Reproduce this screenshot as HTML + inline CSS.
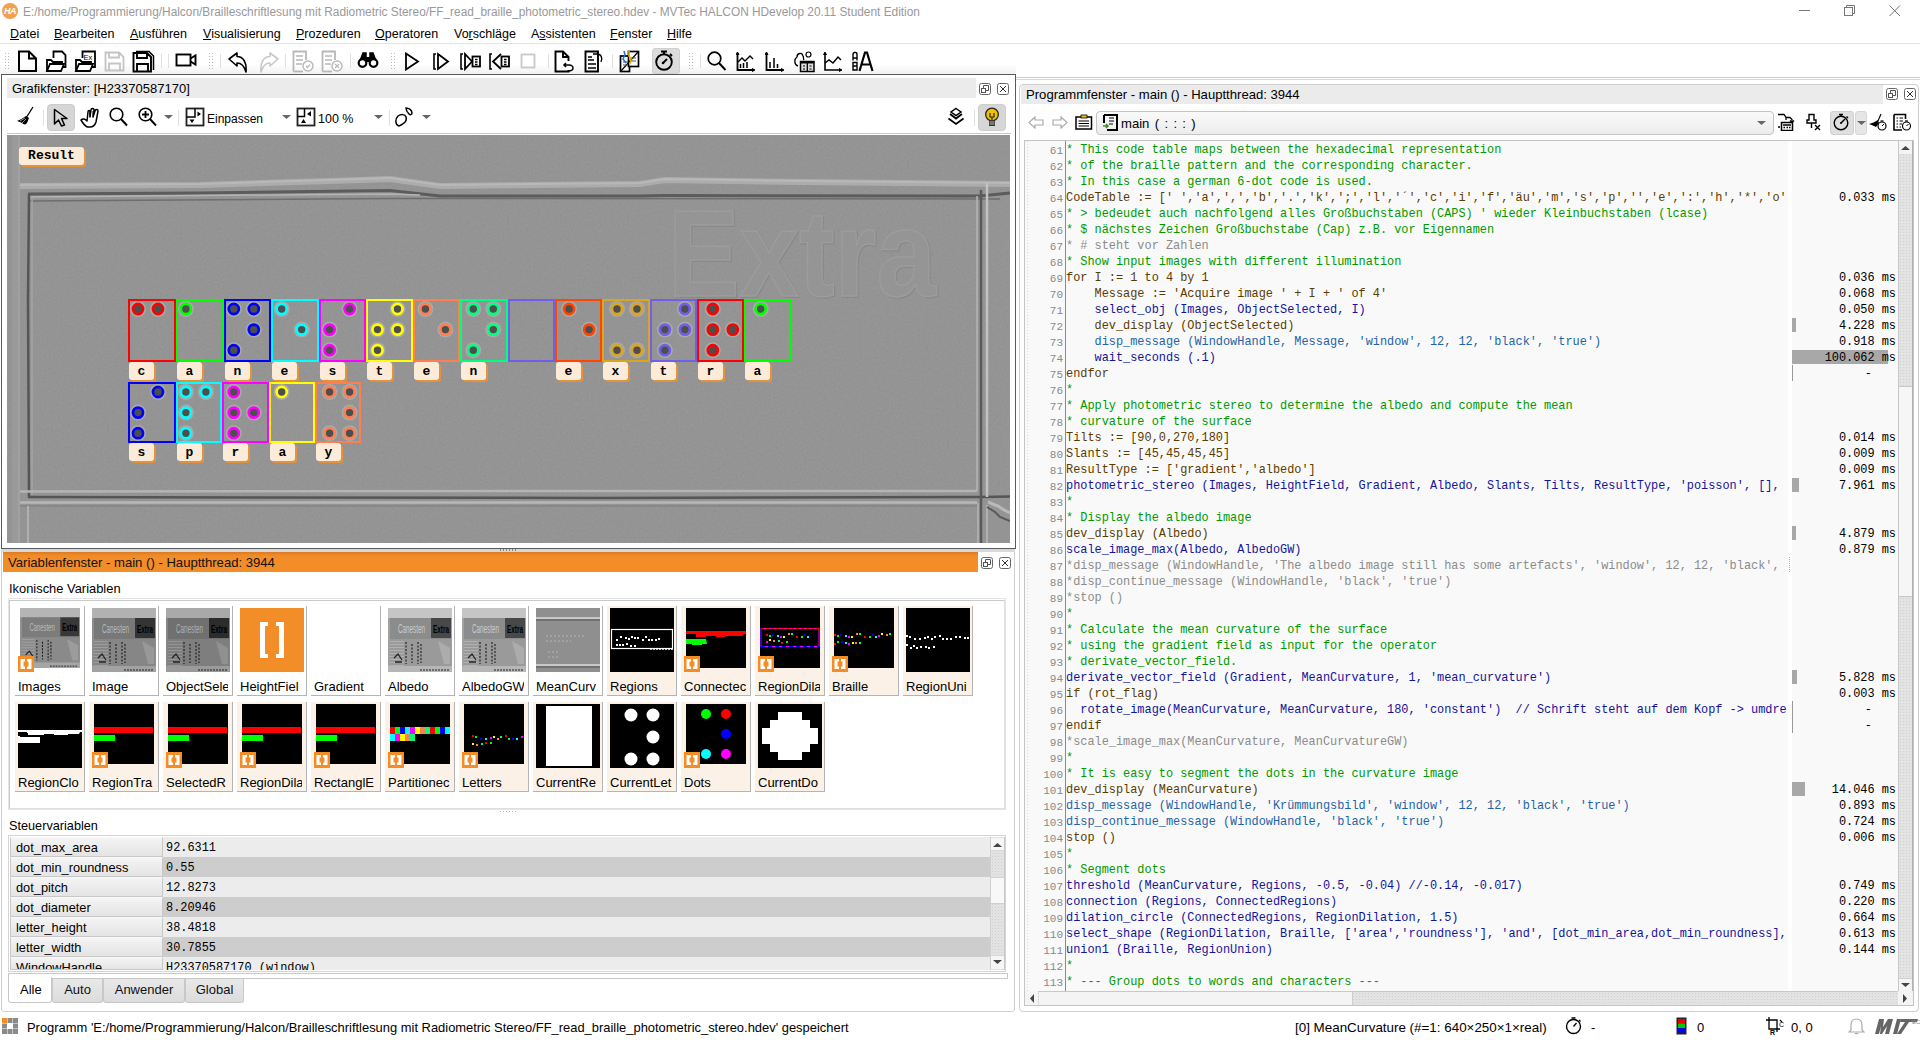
<!DOCTYPE html><html><head><meta charset="utf-8"><style>
*{margin:0;padding:0;box-sizing:border-box}
html,body{width:1920px;height:1040px;overflow:hidden;background:#fff;font-family:"Liberation Sans",sans-serif;color:#000}
div{position:absolute}
.t{white-space:nowrap;font-size:13px;line-height:15px}
.m{font-family:"Liberation Mono",monospace}
u{text-decoration:none;border-bottom:1px solid currentColor;line-height:11px;display:inline-block}
</style></head><body><div style="left:2px;top:3px;width:16px;height:16px;border-radius:50%;background:#f0a050"></div><div class="t" style="left:4px;top:7px;font-size:9px;line-height:9px;color:#fff;letter-spacing:-0.5px"><i style="font-style:italic;font-weight:bold">HA</i></div><div class="t" style="left:23px;top:5px;font-size:11.87px;line-height:14px;color:#999">E:/home/Programmierung/Halcon/Brailleschriftlesung mit Radiometric Stereo/FF_read_braille_photometric_stereo.hdev - MVTec HALCON HDevelop 20.11 Student Edition</div><div style="left:1799px;top:10px;width:11px;height:1px;background:#777"></div><svg style="position:absolute;left:1844px;top:5px;" width="11" height="11" viewBox="0 0 11 11" fill="none" stroke="#000" stroke-width="1.3"><rect x="0.5" y="2.5" width="8" height="8" stroke="#777" stroke-width="1"/><path d="M2.5 2.5V0.5H10.5V8.5H8.5" stroke="#777" stroke-width="1"/></svg><svg style="position:absolute;left:1889px;top:5px;" width="12" height="12" viewBox="0 0 12 12" fill="none" stroke="#000" stroke-width="1.3"><path d="M0.5 0.5L11 11M11 0.5L0.5 11" stroke="#777" stroke-width="1"/></svg><div class="t" style="left:10px;top:27px;font-size:12.5px;color:#000"><span style="text-decoration:underline;text-underline-offset:1px">D</span>atei</div><div class="t" style="left:54px;top:27px;font-size:12.5px;color:#000"><span style="text-decoration:underline;text-underline-offset:1px">B</span>earbeiten</div><div class="t" style="left:130px;top:27px;font-size:12.5px;color:#000"><span style="text-decoration:underline;text-underline-offset:1px">A</span>usführen</div><div class="t" style="left:203px;top:27px;font-size:12.5px;color:#000"><span style="text-decoration:underline;text-underline-offset:1px">V</span>isualisierung</div><div class="t" style="left:296px;top:27px;font-size:12.5px;color:#000"><span style="text-decoration:underline;text-underline-offset:1px">P</span>rozeduren</div><div class="t" style="left:375px;top:27px;font-size:12.5px;color:#000"><span style="text-decoration:underline;text-underline-offset:1px">O</span>peratoren</div><div class="t" style="left:454px;top:27px;font-size:12.5px;color:#000">Vo<span style="text-decoration:underline;text-underline-offset:1px">r</span>schläge</div><div class="t" style="left:531px;top:27px;font-size:12.5px;color:#000">A<span style="text-decoration:underline;text-underline-offset:1px">s</span>sistenten</div><div class="t" style="left:610px;top:27px;font-size:12.5px;color:#000"><span style="text-decoration:underline;text-underline-offset:1px">F</span>enster</div><div class="t" style="left:667px;top:27px;font-size:12.5px;color:#000"><span style="text-decoration:underline;text-underline-offset:1px">H</span>ilfe</div><div style="left:0px;top:43px;width:1920px;height:1px;background:#e3e3e3"></div><div style="left:0px;top:44px;width:1016px;height:31px;background:linear-gradient(#fff 0,#fff 65%,#f0f0f0 100%)"></div><svg style="position:absolute;left:5px;top:53px;" width="5" height="18" viewBox="0 0 5 18" fill="none" stroke="#000" stroke-width="1.3"><rect x="0" y="0" width="1" height="1" fill="#bbb" stroke="none"/><rect x="3" y="0" width="1" height="1" fill="#bbb" stroke="none"/><rect x="0" y="3" width="1" height="1" fill="#bbb" stroke="none"/><rect x="3" y="3" width="1" height="1" fill="#bbb" stroke="none"/><rect x="0" y="6" width="1" height="1" fill="#bbb" stroke="none"/><rect x="3" y="6" width="1" height="1" fill="#bbb" stroke="none"/><rect x="0" y="9" width="1" height="1" fill="#bbb" stroke="none"/><rect x="3" y="9" width="1" height="1" fill="#bbb" stroke="none"/><rect x="0" y="12" width="1" height="1" fill="#bbb" stroke="none"/><rect x="3" y="12" width="1" height="1" fill="#bbb" stroke="none"/><rect x="0" y="15" width="1" height="1" fill="#bbb" stroke="none"/><rect x="3" y="15" width="1" height="1" fill="#bbb" stroke="none"/></svg><svg style="position:absolute;left:17px;top:50px;" width="21" height="23" viewBox="0 0 21 23" fill="none" stroke="#000" stroke-width="1.3"><path d="M2 1.5H12L19 8.5V21H2Z M12 1.5V8.5H19" stroke-width="2"/></svg><svg style="position:absolute;left:45px;top:50px;" width="23" height="23" viewBox="0 0 23 23" fill="none" stroke="#000" stroke-width="1.3"><path d="M8.5 8V1.5H17L20.5 5V17H18" stroke-width="1.8"/><path d="M2 21V10H6L8 12H17V16" stroke-width="1.8"/><path d="M2 21L5 14H19L16 21Z" stroke-width="1.8" fill="#fff"/></svg><svg style="position:absolute;left:74px;top:50px;" width="23" height="23" viewBox="0 0 23 23" fill="none" stroke="#000" stroke-width="1.3"><path d="M8.5 8V1.5H21V17H18" stroke-width="1.8"/><path d="M2 21V10H6L8 12H17V16" stroke-width="1.8"/><path d="M2 21L5 14H19L16 21Z" stroke-width="1.8" fill="#fff"/><text x="9.5" y="10" font-size="7.5" font-family="Liberation Sans" fill="#000" stroke="none">Ex</text></svg><svg style="position:absolute;left:104px;top:51px;" width="21" height="21" viewBox="0 0 21 21" fill="none" stroke="#000" stroke-width="1.3"><path d="M1.5 1.5H15L19.5 6V19.5H1.5Z M5 1.5V6.5H15V1.5 M5 19.5V12.5H16V19.5" stroke="#c4c4c4" stroke-width="1.8"/></svg><svg style="position:absolute;left:132px;top:50px;" width="23" height="23" viewBox="0 0 23 23" fill="none" stroke="#000" stroke-width="1.3"><path d="M1.5 3H15L19 7V21.5H1.5Z M5 3V8H15V3 M5 21.5V14H16V21.5" stroke-width="1.9"/><path d="M4 1.5H17L21.5 6V20" stroke-width="1.5"/></svg><div style="left:161px;top:54px;width:1px;height:14px;background:#e0e0e0"></div><div style="left:168px;top:54px;width:1px;height:14px;background:#e0e0e0"></div><svg style="position:absolute;left:175px;top:53px;" width="23" height="17" viewBox="0 0 23 17" fill="none" stroke="#000" stroke-width="1.3"><rect x="1.5" y="1.5" width="14" height="11" stroke-width="1.9"/><path d="M15.5 5.5L20.5 2.5V11.5L15.5 8.5" stroke-width="1.9"/></svg><svg style="position:absolute;left:209px;top:53px;" width="5" height="18" viewBox="0 0 5 18" fill="none" stroke="#000" stroke-width="1.3"><rect x="0" y="0" width="1" height="1" fill="#bbb" stroke="none"/><rect x="3" y="0" width="1" height="1" fill="#bbb" stroke="none"/><rect x="0" y="3" width="1" height="1" fill="#bbb" stroke="none"/><rect x="3" y="3" width="1" height="1" fill="#bbb" stroke="none"/><rect x="0" y="6" width="1" height="1" fill="#bbb" stroke="none"/><rect x="3" y="6" width="1" height="1" fill="#bbb" stroke="none"/><rect x="0" y="9" width="1" height="1" fill="#bbb" stroke="none"/><rect x="3" y="9" width="1" height="1" fill="#bbb" stroke="none"/><rect x="0" y="12" width="1" height="1" fill="#bbb" stroke="none"/><rect x="3" y="12" width="1" height="1" fill="#bbb" stroke="none"/><rect x="0" y="15" width="1" height="1" fill="#bbb" stroke="none"/><rect x="3" y="15" width="1" height="1" fill="#bbb" stroke="none"/></svg><div style="left:220px;top:54px;width:1px;height:14px;background:#e0e0e0"></div><svg style="position:absolute;left:228px;top:52px;" width="22" height="22" viewBox="0 0 22 22" fill="none" stroke="#000" stroke-width="1.3"><path d="M1 7L9 1V4.5C15 4.5 19 10 18 20C16 13 13 11 9 11V14Z" stroke-width="1.6" stroke-linejoin="round"/></svg><svg style="position:absolute;left:257px;top:52px;" width="22" height="22" viewBox="0 0 22 22" fill="none" stroke="#000" stroke-width="1.3"><path d="M21 7L13 1V4.5C7 4.5 3 10 4 20C6 13 9 11 13 11V14Z" stroke="#c8c8c8" stroke-width="1.6" stroke-linejoin="round"/></svg><div style="left:285px;top:54px;width:1px;height:14px;background:#e0e0e0"></div><svg style="position:absolute;left:292px;top:50px;" width="22" height="23" viewBox="0 0 22 23" fill="none" stroke="#000" stroke-width="1.3"><path d="M1.5 21.5V1.5H14V10" stroke="#b8b8b8" stroke-width="1.8"/><path d="M1.5 21.5H11" stroke="#b8b8b8" stroke-width="1.8"/><path d="M4 6H11M4 10H11M4 14H10" stroke="#b8b8b8" stroke-width="1.5"/><circle cx="16" cy="16" r="5" fill="#fff" stroke="#b8b8b8" stroke-width="1.4"/><path d="M14 16L15.5 17.5L18 14.5" stroke="#bbb" stroke-width="1.3"/></svg><svg style="position:absolute;left:321px;top:50px;" width="22" height="23" viewBox="0 0 22 23" fill="none" stroke="#000" stroke-width="1.3"><path d="M1.5 21.5V1.5H14V10" stroke="#b8b8b8" stroke-width="1.8"/><path d="M1.5 21.5H11" stroke="#b8b8b8" stroke-width="1.8"/><path d="M4 6H11M4 10H11M4 14H10" stroke="#b8b8b8" stroke-width="1.5"/><circle cx="16" cy="16" r="5" fill="#fff" stroke="#b8b8b8" stroke-width="1.4"/><path d="M14 14L18 18M18 14L14 18" stroke="#bbb" stroke-width="1.3"/></svg><div style="left:350px;top:54px;width:1px;height:14px;background:#e0e0e0"></div><svg style="position:absolute;left:357px;top:52px;" width="22" height="16" viewBox="0 0 22 16" fill="none" stroke="#000" stroke-width="1.3"><path d="M3 9L6 1H9V6H13V1H16L19 9" fill="#000" stroke-width="1.5"/><circle cx="5.5" cy="11" r="3.8" fill="#fff" stroke-width="2.2"/><circle cx="16.5" cy="11" r="3.8" fill="#fff" stroke-width="2.2"/><rect x="9" y="5" width="4" height="5" fill="#000" stroke="none"/></svg><svg style="position:absolute;left:391px;top:53px;" width="5" height="18" viewBox="0 0 5 18" fill="none" stroke="#000" stroke-width="1.3"><rect x="0" y="0" width="1" height="1" fill="#bbb" stroke="none"/><rect x="3" y="0" width="1" height="1" fill="#bbb" stroke="none"/><rect x="0" y="3" width="1" height="1" fill="#bbb" stroke="none"/><rect x="3" y="3" width="1" height="1" fill="#bbb" stroke="none"/><rect x="0" y="6" width="1" height="1" fill="#bbb" stroke="none"/><rect x="3" y="6" width="1" height="1" fill="#bbb" stroke="none"/><rect x="0" y="9" width="1" height="1" fill="#bbb" stroke="none"/><rect x="3" y="9" width="1" height="1" fill="#bbb" stroke="none"/><rect x="0" y="12" width="1" height="1" fill="#bbb" stroke="none"/><rect x="3" y="12" width="1" height="1" fill="#bbb" stroke="none"/><rect x="0" y="15" width="1" height="1" fill="#bbb" stroke="none"/><rect x="3" y="15" width="1" height="1" fill="#bbb" stroke="none"/></svg><svg style="position:absolute;left:405px;top:52px;" width="15" height="19" viewBox="0 0 15 19" fill="none" stroke="#000" stroke-width="1.3"><path d="M1 1.5L13 9.5L1 17.5Z" stroke-width="1.8" stroke-linejoin="miter"/></svg><svg style="position:absolute;left:433px;top:52px;" width="17" height="19" viewBox="0 0 17 19" fill="none" stroke="#000" stroke-width="1.3"><path d="M3 2H1V17H3" stroke-width="1.6"/><path d="M5 2L15 9.5L5 17Z" stroke-width="1.8"/></svg><svg style="position:absolute;left:460px;top:52px;" width="22" height="19" viewBox="0 0 22 19" fill="none" stroke="#000" stroke-width="1.3"><path d="M3 2H1V17H3" stroke-width="1.6"/><path d="M5 2L12 9.5L5 17Z" stroke-width="1.8"/><rect x="12.5" y="4.5" width="7.5" height="10" stroke-width="1.8"/><path d="M15 7.5H17.5M15 10H17.5M15 12.5H17.5" stroke-width="1.3"/></svg><svg style="position:absolute;left:489px;top:52px;" width="22" height="19" viewBox="0 0 22 19" fill="none" stroke="#000" stroke-width="1.3"><path d="M3 2H1V17H3" stroke-width="1.6"/><path d="M12 2L4 9.5L12 17" stroke-width="1.8"/><rect x="12.5" y="4.5" width="7.5" height="10" stroke-width="1.8"/><path d="M15 7.5H17.5M15 10H17.5M15 12.5H17.5" stroke-width="1.3"/></svg><svg style="position:absolute;left:520px;top:53px;" width="17" height="17" viewBox="0 0 17 17" fill="none" stroke="#000" stroke-width="1.3"><rect x="1.5" y="1.5" width="13" height="13" stroke="#c8c8c8" stroke-width="1.8"/></svg><div style="left:548px;top:54px;width:1px;height:14px;background:#e0e0e0"></div><svg style="position:absolute;left:554px;top:50px;" width="22" height="23" viewBox="0 0 22 23" fill="none" stroke="#000" stroke-width="1.3"><path d="M14.5 11V7L9 1.5H1.5V21.5H14.5V20 M9 1.5V7H14.5" stroke-width="1.9"/><path d="M12 13L10 15L12 17 M10 15H15C18 15 19 17 19 18C19 20 17 21 14 21" stroke-width="1.5"/></svg><svg style="position:absolute;left:584px;top:50px;" width="21" height="23" viewBox="0 0 21 23" fill="none" stroke="#000" stroke-width="1.3"><path d="M1.5 1.5H14V21.5H1.5Z" stroke-width="1.9"/><path d="M4 7H8M4 10H10M4 14H12M4 18H12" stroke-width="1.4"/><path d="M9 4H13C17 4 19 8 17 12" stroke-width="1.4"/></svg><div style="left:612px;top:54px;width:1px;height:14px;background:#e0e0e0"></div><svg style="position:absolute;left:619px;top:50px;" width="22" height="23" viewBox="0 0 22 23" fill="none" stroke="#000" stroke-width="1.3"><rect x="1.5" y="6" width="9" height="15.5" stroke-width="1.7" fill="#fff"/><rect x="9.5" y="1.5" width="10" height="15" stroke-width="1.7" fill="#fff"/><path d="M2 21L19 2" stroke-width="1.2"/><path d="M4 12H9M4 15H9M12 8H17M12 11H17" stroke-width="1.1" stroke="#555"/><path d="M5 1L6 5L4 9L7 13" stroke="#1a6fe0" stroke-width="1.5"/><path d="M10 1L10 6L12 9L11 14" stroke="#f0b000" stroke-width="1.5"/></svg><div style="left:652px;top:48px;width:28px;height:26px;background:#dcdcdc;border:1px solid #cfcfcf;border-radius:3px"></div><svg style="position:absolute;left:655px;top:50px;" width="20" height="21" viewBox="0 0 20 21" fill="none" stroke="#000" stroke-width="1.3"><circle cx="9" cy="12" r="7.8" stroke-width="1.9"/><path d="M6 1.5H12 M9 1.5V4" stroke-width="2"/><path d="M15 4L17 6" stroke-width="1.8"/><path d="M8 13L12 9" stroke-width="1.8"/><circle cx="8" cy="13" r="1.3" fill="#000" stroke="none"/></svg><svg style="position:absolute;left:689px;top:53px;" width="5" height="18" viewBox="0 0 5 18" fill="none" stroke="#000" stroke-width="1.3"><rect x="0" y="0" width="1" height="1" fill="#bbb" stroke="none"/><rect x="3" y="0" width="1" height="1" fill="#bbb" stroke="none"/><rect x="0" y="3" width="1" height="1" fill="#bbb" stroke="none"/><rect x="3" y="3" width="1" height="1" fill="#bbb" stroke="none"/><rect x="0" y="6" width="1" height="1" fill="#bbb" stroke="none"/><rect x="3" y="6" width="1" height="1" fill="#bbb" stroke="none"/><rect x="0" y="9" width="1" height="1" fill="#bbb" stroke="none"/><rect x="3" y="9" width="1" height="1" fill="#bbb" stroke="none"/><rect x="0" y="12" width="1" height="1" fill="#bbb" stroke="none"/><rect x="3" y="12" width="1" height="1" fill="#bbb" stroke="none"/><rect x="0" y="15" width="1" height="1" fill="#bbb" stroke="none"/><rect x="3" y="15" width="1" height="1" fill="#bbb" stroke="none"/></svg><div style="left:700px;top:54px;width:1px;height:14px;background:#e0e0e0"></div><svg style="position:absolute;left:707px;top:51px;" width="20" height="21" viewBox="0 0 20 21" fill="none" stroke="#000" stroke-width="1.3"><circle cx="7.5" cy="7.5" r="6.3" stroke-width="1.7"/><path d="M12 12L18.5 19" stroke-width="1.9"/></svg><svg style="position:absolute;left:736px;top:51px;" width="20" height="21" viewBox="0 0 20 21" fill="none" stroke="#000" stroke-width="1.3"><path d="M1.5 2V19H18" stroke-width="1.8"/><path d="M0 4L1.5 1L3 4M16 17.5L19 19L16 20.5" fill="#000" stroke-width="1"/><path d="M2 11L6 7L9 10L14 5L17 8" stroke-width="1.4"/><path d="M4.5 17V13M7.5 17V12M11 17V11" stroke-width="1.5"/></svg><svg style="position:absolute;left:765px;top:51px;" width="20" height="21" viewBox="0 0 20 21" fill="none" stroke="#000" stroke-width="1.3"><path d="M1.5 2V19H18" stroke-width="1.8"/><path d="M0 4L1.5 1L3 4M16 17.5L19 19L16 20.5" fill="#000" stroke-width="1"/><path d="M5 17V11M9 17V7M12.5 17V13" stroke-width="1.5"/></svg><svg style="position:absolute;left:794px;top:51px;" width="23" height="22" viewBox="0 0 23 22" fill="none" stroke="#000" stroke-width="1.3"><path d="M4 15C0 14 0 8 3 6C3 2 8 1 9 5C10 6 9 8 10 9" stroke-width="1.3"/><circle cx="14.5" cy="3.5" r="2.5" stroke-width="1.2"/><rect x="6.5" y="10.5" width="13.5" height="10" stroke-width="1.5" fill="#ddd"/><rect x="7" y="10" width="13" height="2.5" fill="#000" stroke="none"/><path d="M13.3 12V20" stroke-width="1.3"/><path d="M9 15H11M9 18H11M15.5 15H17.5M15.5 18H17.5" stroke-width="1.2"/></svg><svg style="position:absolute;left:823px;top:51px;" width="20" height="22" viewBox="0 0 20 22" fill="none" stroke="#000" stroke-width="1.3"><path d="M2 2V19H18" stroke-width="1.6"/><path d="M0.5 4L2 1L3.5 4M16 17.5L19 19L16 20.5" fill="#000" stroke-width="1"/><path d="M2 12L6 9L10 12L15 6L18 9" stroke-width="1.5"/></svg><svg style="position:absolute;left:851px;top:51px;" width="23" height="22" viewBox="0 0 23 22" fill="none" stroke="#000" stroke-width="1.3"><path d="M3 1.5H4.5C5 1.5 6 2 6 3.5V7H2V3.5C2 2 3 1.5 3.5 1.5Z M2 7V9.5 M6 7V9.5 M2 11.5H6V19H2Z M2 15H6" stroke-width="1.4"/><path d="M8.5 20L14 1.5H16L21.5 20 M10.5 13.5H19" stroke-width="2.2"/></svg><div style="left:1px;top:74px;width:1015px;height:475px;background:#fff;border:1px solid #5a5a5a"></div><div style="left:7px;top:78px;width:969px;height:20px;background:#ebebeb"></div><div class="t" style="left:12px;top:81px;font-size:13px;color:#000">Grafikfenster: [H23370587170]</div><svg style="position:absolute;left:979px;top:83px;" width="12" height="12" viewBox="0 0 12 12" fill="none" stroke="#000" stroke-width="1.3"><rect x="0.5" y="0.5" width="11" height="11" rx="2" stroke="#666" stroke-width="1"/><rect x="2.5" y="5.5" width="4" height="4" stroke="#555" stroke-width="1"/><path d="M4.5 5.5V2.5H9.5V7.5H6.5" stroke="#555" stroke-width="1"/></svg><svg style="position:absolute;left:997px;top:83px;" width="12" height="12" viewBox="0 0 12 12" fill="none" stroke="#000" stroke-width="1.3"><rect x="0.5" y="0.5" width="11" height="11" rx="2" stroke="#666" stroke-width="1"/><path d="M3 3L9 9M9 3L3 9" stroke="#333" stroke-width="1"/></svg><svg style="position:absolute;left:16px;top:106px;" width="19" height="20" viewBox="0 0 19 20" fill="none" stroke="#000" stroke-width="1.3"><path d="M17 1L10 12" stroke-width="1.3"/><path d="M10 10C7 12 4 14 1 15C3 16 5 16 6 17C7 18 9 19 10 18C12 16 12 14 13 12Z" fill="#000" stroke="none"/><path d="M4 15L9 12M6 17L10 13" stroke="#fff" stroke-width="0.6"/></svg><div style="left:43px;top:110px;width:1px;height:16px;background:#e0e0e0"></div><div style="left:47px;top:104px;width:28px;height:27px;background:#d6d6d6;border:1px solid #cdcdcd;border-radius:4px"></div><svg style="position:absolute;left:53px;top:108px;" width="16" height="19" viewBox="0 0 16 19" fill="none" stroke="#000" stroke-width="1.3"><path d="M1.5 1.5L14 10.5H8.5L11.5 17L8.5 18L5.5 12L1.5 16Z" stroke-width="1.5" stroke-linejoin="round"/></svg><svg style="position:absolute;left:80px;top:107px;" width="21" height="21" viewBox="0 0 21 21" fill="none" stroke="#000" stroke-width="1.3"><path d="M1 13C3 11 5 12 7 14L8 5C8 3 10 3 10 5V10L11 3C11 1 14 1 14 3L13 10L15 4C15 2 18 2 18 4L16 15C15 18 13 20 10 20H8C6 20 4 18 1 13Z" stroke-width="1.5" stroke-linejoin="round"/><path d="M10 10V5M13 10V4" stroke-width="1"/></svg><svg style="position:absolute;left:109px;top:107px;" width="20" height="20" viewBox="0 0 20 20" fill="none" stroke="#000" stroke-width="1.3"><circle cx="7.5" cy="7.5" r="6.3" stroke-width="1.6"/><path d="M12 12L18 18.5" stroke-width="1.9"/></svg><svg style="position:absolute;left:138px;top:107px;" width="20" height="20" viewBox="0 0 20 20" fill="none" stroke="#000" stroke-width="1.3"><circle cx="7.5" cy="7.5" r="6.3" stroke-width="1.6"/><path d="M12 12L18 18.5" stroke-width="1.9"/><path d="M4 7.5H11M7.5 4V11" stroke-width="1.8"/></svg><svg style="position:absolute;left:164px;top:115px;" width="9" height="5" viewBox="0 0 9 5" fill="none" stroke="#000" stroke-width="1.3"><path d="M0 0H9L4.5 4Z" fill="#666" stroke="none"/></svg><div style="left:178px;top:110px;width:1px;height:16px;background:#e0e0e0"></div><svg style="position:absolute;left:185px;top:107px;" width="20" height="20" viewBox="0 0 20 20" fill="none" stroke="#000" stroke-width="1.3"><rect x="1.5" y="1.5" width="17" height="17" stroke-width="1.8" stroke="#222"/><path d="M1.5 10H10V1.5" stroke-width="1.5"/><path d="M12.5 4.5L16 7L12.5 9.5Z M4.5 12.5H9.5L7 16Z" fill="#000" stroke="none"/></svg><div class="t" style="left:207px;top:112px;font-size:12px;color:#000">Einpassen</div><svg style="position:absolute;left:282px;top:115px;" width="9" height="5" viewBox="0 0 9 5" fill="none" stroke="#000" stroke-width="1.3"><path d="M0 0H9L4.5 4Z" fill="#666" stroke="none"/></svg><svg style="position:absolute;left:296px;top:107px;" width="20" height="20" viewBox="0 0 20 20" fill="none" stroke="#000" stroke-width="1.3"><rect x="1.5" y="1.5" width="17" height="17" stroke-width="1.8" stroke="#222"/><path d="M1.5 9.5H8.5V1.5" stroke-width="1.5"/><path d="M15 4L11 7L15 9.5Z M5 16H10L7.5 12Z" fill="#000" stroke="none"/></svg><div class="t" style="left:318px;top:112px;font-size:12.5px;color:#000">100 %</div><svg style="position:absolute;left:374px;top:115px;" width="9" height="5" viewBox="0 0 9 5" fill="none" stroke="#000" stroke-width="1.3"><path d="M0 0H9L4.5 4Z" fill="#666" stroke="none"/></svg><div style="left:389px;top:110px;width:1px;height:16px;background:#e0e0e0"></div><svg style="position:absolute;left:395px;top:107px;" width="23" height="21" viewBox="0 0 23 21" fill="none" stroke="#000" stroke-width="1.3"><path d="M4 19C0 18 0 12 3 9C6 7 10 7 11 10C12 13 10 16 6 18Z" stroke-width="1.5"/><path d="M11 1C14 1 17 3 17 6C17 8 15 8 14 7C13 6 11 3 11 1Z" stroke-width="1.5"/></svg><svg style="position:absolute;left:422px;top:115px;" width="9" height="5" viewBox="0 0 9 5" fill="none" stroke="#000" stroke-width="1.3"><path d="M0 0H9L4.5 4Z" fill="#666" stroke="none"/></svg><svg style="position:absolute;left:947px;top:107px;" width="19" height="20" viewBox="0 0 19 20" fill="none" stroke="#000" stroke-width="1.3"><path d="M9 1.5L14 5L9 8.5L4 5Z" stroke-width="1.5"/><path d="M3 7L9 11.5L15 7" stroke-width="1.8"/><path d="M1.5 11.5L9 17L16.5 11.5" stroke-width="1.8"/></svg><div style="left:974px;top:110px;width:1px;height:16px;background:#e0e0e0"></div><div style="left:978px;top:104px;width:28px;height:27px;background:#d6d6d6;border:1px solid #cdcdcd;border-radius:4px"></div><svg style="position:absolute;left:983px;top:107px;" width="18" height="21" viewBox="0 0 18 21" fill="none" stroke="#000" stroke-width="1.3"><circle cx="9" cy="7.5" r="6.3" fill="#f2c200" stroke="#222" stroke-width="1.3"/><path d="M7 6V10H11V6" stroke="#222" stroke-width="1.2"/><path d="M9 10V13" stroke="#222" stroke-width="1.2"/><rect x="6" y="13" width="6" height="6" fill="#333" stroke="none"/><path d="M6.5 15H11.5M6.5 17H11.5" stroke="#ddd" stroke-width="0.8"/></svg><div style="left:7px;top:133px;width:1004px;height:1px;background:#c8c8c8"></div><svg style="position:absolute;left:7px;top:135px" width="1003" height="408" viewBox="0 0 1003 408" fill="none"><defs><filter id="nz" x="0" y="0" width="100%" height="100%"><feTurbulence type="fractalNoise" baseFrequency="0.45" numOctaves="2" seed="7"/><feColorMatrix type="matrix" values="0.33 0.33 0.33 0 0 0.33 0.33 0.33 0 0 0.33 0.33 0.33 0 0 0 0 0 0 1"/></filter></defs><rect x="0" y="0" width="1003" height="408" fill="#909090"/><rect x="0" y="0" width="1003" height="408" filter="url(#nz)" opacity="0.10"/><path d="M13 51 L193 50 L323 46 L383 44 L433 51 L633 49 L658 45 L793 47 L1003 49" stroke="#acacac" stroke-width="6" stroke-opacity="1" fill="none"/><path d="M13 50 L193 49 L323 45 L383 43 L433 50 L633 48 L658 44 L793 46 L1003 48" stroke="#b8b8b8" stroke-width="2" stroke-opacity="1" fill="none"/><path d="M21 59 L193 58 L383 55.5 L433 61 L633 61 L658 60.5 L973 61 L1003 58" stroke="#5c5c5c" stroke-width="3" stroke-opacity="1" fill="none"/><path d="M21 62 L383 59 L413 60" stroke="#b4b4b4" stroke-width="1.5" stroke-opacity="1" fill="none"/><path d="M21 66 L383 63.5 L993 64" stroke="#6e6e6e" stroke-width="1.5" stroke-opacity="1" fill="none"/><path d="M8 0 L8 408" stroke="#9a9a9a" stroke-width="6" stroke-opacity="1" fill="none"/><path d="M12 0 L12 408" stroke="#a6a6a6" stroke-width="1.5" stroke-opacity="1" fill="none"/><path d="M22 59 L21 165 L22 362" stroke="#555" stroke-width="2.5" stroke-opacity="1" fill="none"/><path d="M25 63 L25 360" stroke="#a4a4a4" stroke-width="1.5" stroke-opacity="1" fill="none"/><path d="M13 356.5 L593 356 L970 356" stroke="#b4b4b4" stroke-width="2.5" stroke-opacity="1" fill="none"/><path d="M21 362 L593 363 L974 362 L1003 361.5" stroke="#555" stroke-width="2.5" stroke-opacity="1" fill="none"/><path d="M13 367.5 L970 367.5" stroke="#b8b8b8" stroke-width="2.5" stroke-opacity="1" fill="none"/><path d="M13 371 L970 371" stroke="#858585" stroke-width="1.5" stroke-opacity="1" fill="none"/><path d="M21 371 L21 408" stroke="#b0b0b0" stroke-width="2" stroke-opacity="1" fill="none"/><path d="M970 61 L970 356" stroke="#b4b4b4" stroke-width="1.5" stroke-opacity="1" fill="none"/><path d="M974 55 L974 408" stroke="#5a5a5a" stroke-width="2.5" stroke-opacity="1" fill="none"/><path d="M980 48 L980 362" stroke="#c2c2c2" stroke-width="2.5" stroke-opacity="1" fill="none"/><path d="M971 368 L971 408" stroke="#b4b4b4" stroke-width="1.5" stroke-opacity="1" fill="none"/><path d="M980 370 L980 408" stroke="#b0b0b0" stroke-width="2" stroke-opacity="1" fill="none"/><path d="M981 367 L991 371 L997 375 L1003 378" stroke="#bababa" stroke-width="3" stroke-opacity="1" fill="none"/><path d="M980 372 L988 377 L993 382 L1003 386" stroke="#5a5a5a" stroke-width="2" stroke-opacity="1" fill="none"/><g opacity="0.42"><text x="662" y="162" font-family="Liberation Sans" font-weight="bold" font-size="122" textLength="268" lengthAdjust="spacingAndGlyphs" fill="none" stroke="#7c7c7c" stroke-width="2">Extra</text><text x="661" y="161" font-family="Liberation Sans" font-weight="bold" font-size="122" textLength="268" lengthAdjust="spacingAndGlyphs" fill="#979797" stroke="#a8a8a8" stroke-width="1.5">Extra</text></g><rect x="122" y="165" width="46" height="61" stroke="#ff0000" stroke-width="2" fill="none"/><circle cx="131.0" cy="174.0" r="8" fill="#c8c8c8" fill-opacity="0.4"/><circle cx="131.0" cy="174.0" r="5.05" fill="#4e4e4e" stroke="#ff0000" stroke-width="2.7"/><circle cx="151.0" cy="174.0" r="8" fill="#c8c8c8" fill-opacity="0.4"/><circle cx="151.0" cy="174.0" r="5.05" fill="#4e4e4e" stroke="#ff0000" stroke-width="2.7"/><rect x="170" y="165" width="46" height="61" stroke="#00ff00" stroke-width="2" fill="none"/><circle cx="178.9" cy="174.0" r="8" fill="#c8c8c8" fill-opacity="0.4"/><circle cx="178.9" cy="174.0" r="5.05" fill="#4e4e4e" stroke="#00ff00" stroke-width="2.7"/><rect x="218" y="165" width="45" height="61" stroke="#0000ff" stroke-width="2" fill="none"/><circle cx="226.8" cy="174.0" r="8" fill="#c8c8c8" fill-opacity="0.4"/><circle cx="226.8" cy="174.0" r="5.05" fill="#4e4e4e" stroke="#0000ff" stroke-width="2.7"/><circle cx="226.8" cy="215.2" r="8" fill="#c8c8c8" fill-opacity="0.4"/><circle cx="226.8" cy="215.2" r="5.05" fill="#4e4e4e" stroke="#0000ff" stroke-width="2.7"/><circle cx="246.8" cy="174.0" r="8" fill="#c8c8c8" fill-opacity="0.4"/><circle cx="246.8" cy="174.0" r="5.05" fill="#4e4e4e" stroke="#0000ff" stroke-width="2.7"/><circle cx="246.8" cy="194.60000000000002" r="8" fill="#c8c8c8" fill-opacity="0.4"/><circle cx="246.8" cy="194.60000000000002" r="5.05" fill="#4e4e4e" stroke="#0000ff" stroke-width="2.7"/><rect x="265" y="165" width="46" height="61" stroke="#00ffff" stroke-width="2" fill="none"/><circle cx="274.7" cy="174.0" r="8" fill="#c8c8c8" fill-opacity="0.4"/><circle cx="274.7" cy="174.0" r="5.05" fill="#4e4e4e" stroke="#00ffff" stroke-width="2.7"/><circle cx="294.7" cy="194.60000000000002" r="8" fill="#c8c8c8" fill-opacity="0.4"/><circle cx="294.7" cy="194.60000000000002" r="5.05" fill="#4e4e4e" stroke="#00ffff" stroke-width="2.7"/><rect x="313" y="165" width="45" height="61" stroke="#ff00ff" stroke-width="2" fill="none"/><circle cx="322.6" cy="194.60000000000002" r="8" fill="#c8c8c8" fill-opacity="0.4"/><circle cx="322.6" cy="194.60000000000002" r="5.05" fill="#4e4e4e" stroke="#ff00ff" stroke-width="2.7"/><circle cx="322.6" cy="215.2" r="8" fill="#c8c8c8" fill-opacity="0.4"/><circle cx="322.6" cy="215.2" r="5.05" fill="#4e4e4e" stroke="#ff00ff" stroke-width="2.7"/><circle cx="342.6" cy="174.0" r="8" fill="#c8c8c8" fill-opacity="0.4"/><circle cx="342.6" cy="174.0" r="5.05" fill="#4e4e4e" stroke="#ff00ff" stroke-width="2.7"/><rect x="360" y="165" width="45" height="61" stroke="#ffff00" stroke-width="2" fill="none"/><circle cx="370.5" cy="194.60000000000002" r="8" fill="#c8c8c8" fill-opacity="0.4"/><circle cx="370.5" cy="194.60000000000002" r="5.05" fill="#4e4e4e" stroke="#ffff00" stroke-width="2.7"/><circle cx="370.5" cy="215.2" r="8" fill="#c8c8c8" fill-opacity="0.4"/><circle cx="370.5" cy="215.2" r="5.05" fill="#4e4e4e" stroke="#ffff00" stroke-width="2.7"/><circle cx="390.5" cy="174.0" r="8" fill="#c8c8c8" fill-opacity="0.4"/><circle cx="390.5" cy="174.0" r="5.05" fill="#4e4e4e" stroke="#ffff00" stroke-width="2.7"/><circle cx="390.5" cy="194.60000000000002" r="8" fill="#c8c8c8" fill-opacity="0.4"/><circle cx="390.5" cy="194.60000000000002" r="5.05" fill="#4e4e4e" stroke="#ffff00" stroke-width="2.7"/><rect x="407" y="165" width="45" height="61" stroke="#ff7f50" stroke-width="2" fill="none"/><circle cx="418.4" cy="174.0" r="8" fill="#c8c8c8" fill-opacity="0.4"/><circle cx="418.4" cy="174.0" r="5.05" fill="#4e4e4e" stroke="#ff7f50" stroke-width="2.7"/><circle cx="438.4" cy="194.60000000000002" r="8" fill="#c8c8c8" fill-opacity="0.4"/><circle cx="438.4" cy="194.60000000000002" r="5.05" fill="#4e4e4e" stroke="#ff7f50" stroke-width="2.7"/><rect x="454" y="165" width="46" height="61" stroke="#00ff7f" stroke-width="2" fill="none"/><circle cx="466.3" cy="174.0" r="8" fill="#c8c8c8" fill-opacity="0.4"/><circle cx="466.3" cy="174.0" r="5.05" fill="#4e4e4e" stroke="#00ff7f" stroke-width="2.7"/><circle cx="466.3" cy="215.2" r="8" fill="#c8c8c8" fill-opacity="0.4"/><circle cx="466.3" cy="215.2" r="5.05" fill="#4e4e4e" stroke="#00ff7f" stroke-width="2.7"/><circle cx="486.3" cy="174.0" r="8" fill="#c8c8c8" fill-opacity="0.4"/><circle cx="486.3" cy="174.0" r="5.05" fill="#4e4e4e" stroke="#00ff7f" stroke-width="2.7"/><circle cx="486.3" cy="194.60000000000002" r="8" fill="#c8c8c8" fill-opacity="0.4"/><circle cx="486.3" cy="194.60000000000002" r="5.05" fill="#4e4e4e" stroke="#00ff7f" stroke-width="2.7"/><rect x="502" y="165" width="45" height="61" stroke="#6f5fe8" stroke-width="2" fill="none"/><rect x="549" y="165" width="45" height="61" stroke="#ff4500" stroke-width="2" fill="none"/><circle cx="562.0999999999999" cy="174.0" r="8" fill="#c8c8c8" fill-opacity="0.4"/><circle cx="562.0999999999999" cy="174.0" r="5.05" fill="#4e4e4e" stroke="#ff4500" stroke-width="2.7"/><circle cx="582.0999999999999" cy="194.60000000000002" r="8" fill="#c8c8c8" fill-opacity="0.4"/><circle cx="582.0999999999999" cy="194.60000000000002" r="5.05" fill="#4e4e4e" stroke="#ff4500" stroke-width="2.7"/><rect x="596" y="165" width="46" height="61" stroke="#daa520" stroke-width="2" fill="none"/><circle cx="610.0" cy="174.0" r="8" fill="#c8c8c8" fill-opacity="0.4"/><circle cx="610.0" cy="174.0" r="5.05" fill="#4e4e4e" stroke="#daa520" stroke-width="2.7"/><circle cx="610.0" cy="215.2" r="8" fill="#c8c8c8" fill-opacity="0.4"/><circle cx="610.0" cy="215.2" r="5.05" fill="#4e4e4e" stroke="#daa520" stroke-width="2.7"/><circle cx="630.0" cy="174.0" r="8" fill="#c8c8c8" fill-opacity="0.4"/><circle cx="630.0" cy="174.0" r="5.05" fill="#4e4e4e" stroke="#daa520" stroke-width="2.7"/><circle cx="630.0" cy="215.2" r="8" fill="#c8c8c8" fill-opacity="0.4"/><circle cx="630.0" cy="215.2" r="5.05" fill="#4e4e4e" stroke="#daa520" stroke-width="2.7"/><rect x="644" y="165" width="45" height="61" stroke="#7060e8" stroke-width="2" fill="none"/><circle cx="657.9" cy="194.60000000000002" r="8" fill="#c8c8c8" fill-opacity="0.4"/><circle cx="657.9" cy="194.60000000000002" r="5.05" fill="#4e4e4e" stroke="#7060e8" stroke-width="2.7"/><circle cx="657.9" cy="215.2" r="8" fill="#c8c8c8" fill-opacity="0.4"/><circle cx="657.9" cy="215.2" r="5.05" fill="#4e4e4e" stroke="#7060e8" stroke-width="2.7"/><circle cx="677.9" cy="174.0" r="8" fill="#c8c8c8" fill-opacity="0.4"/><circle cx="677.9" cy="174.0" r="5.05" fill="#4e4e4e" stroke="#7060e8" stroke-width="2.7"/><circle cx="677.9" cy="194.60000000000002" r="8" fill="#c8c8c8" fill-opacity="0.4"/><circle cx="677.9" cy="194.60000000000002" r="5.05" fill="#4e4e4e" stroke="#7060e8" stroke-width="2.7"/><rect x="691" y="165" width="45" height="61" stroke="#ff0000" stroke-width="2" fill="none"/><circle cx="705.8" cy="174.0" r="8" fill="#c8c8c8" fill-opacity="0.4"/><circle cx="705.8" cy="174.0" r="5.05" fill="#4e4e4e" stroke="#ff0000" stroke-width="2.7"/><circle cx="705.8" cy="194.60000000000002" r="8" fill="#c8c8c8" fill-opacity="0.4"/><circle cx="705.8" cy="194.60000000000002" r="5.05" fill="#4e4e4e" stroke="#ff0000" stroke-width="2.7"/><circle cx="705.8" cy="215.2" r="8" fill="#c8c8c8" fill-opacity="0.4"/><circle cx="705.8" cy="215.2" r="5.05" fill="#4e4e4e" stroke="#ff0000" stroke-width="2.7"/><circle cx="725.8" cy="194.60000000000002" r="8" fill="#c8c8c8" fill-opacity="0.4"/><circle cx="725.8" cy="194.60000000000002" r="5.05" fill="#4e4e4e" stroke="#ff0000" stroke-width="2.7"/><rect x="738" y="165" width="45" height="61" stroke="#00ff00" stroke-width="2" fill="none"/><circle cx="753.6999999999999" cy="174.0" r="8" fill="#c8c8c8" fill-opacity="0.4"/><circle cx="753.6999999999999" cy="174.0" r="5.05" fill="#4e4e4e" stroke="#00ff00" stroke-width="2.7"/><rect x="122" y="248" width="46" height="59" stroke="#0000ff" stroke-width="2" fill="none"/><circle cx="131.0" cy="277.6" r="8" fill="#c8c8c8" fill-opacity="0.4"/><circle cx="131.0" cy="277.6" r="5.05" fill="#4e4e4e" stroke="#0000ff" stroke-width="2.7"/><circle cx="131.0" cy="298.2" r="8" fill="#c8c8c8" fill-opacity="0.4"/><circle cx="131.0" cy="298.2" r="5.05" fill="#4e4e4e" stroke="#0000ff" stroke-width="2.7"/><circle cx="151.0" cy="257.0" r="8" fill="#c8c8c8" fill-opacity="0.4"/><circle cx="151.0" cy="257.0" r="5.05" fill="#4e4e4e" stroke="#0000ff" stroke-width="2.7"/><rect x="170" y="248" width="44" height="59" stroke="#00ffff" stroke-width="2" fill="none"/><circle cx="178.9" cy="257.0" r="8" fill="#c8c8c8" fill-opacity="0.4"/><circle cx="178.9" cy="257.0" r="5.05" fill="#4e4e4e" stroke="#00ffff" stroke-width="2.7"/><circle cx="178.9" cy="277.6" r="8" fill="#c8c8c8" fill-opacity="0.4"/><circle cx="178.9" cy="277.6" r="5.05" fill="#4e4e4e" stroke="#00ffff" stroke-width="2.7"/><circle cx="178.9" cy="298.2" r="8" fill="#c8c8c8" fill-opacity="0.4"/><circle cx="178.9" cy="298.2" r="5.05" fill="#4e4e4e" stroke="#00ffff" stroke-width="2.7"/><circle cx="198.9" cy="257.0" r="8" fill="#c8c8c8" fill-opacity="0.4"/><circle cx="198.9" cy="257.0" r="5.05" fill="#4e4e4e" stroke="#00ffff" stroke-width="2.7"/><rect x="216" y="248" width="45" height="59" stroke="#ff00ff" stroke-width="2" fill="none"/><circle cx="226.8" cy="257.0" r="8" fill="#c8c8c8" fill-opacity="0.4"/><circle cx="226.8" cy="257.0" r="5.05" fill="#4e4e4e" stroke="#ff00ff" stroke-width="2.7"/><circle cx="226.8" cy="277.6" r="8" fill="#c8c8c8" fill-opacity="0.4"/><circle cx="226.8" cy="277.6" r="5.05" fill="#4e4e4e" stroke="#ff00ff" stroke-width="2.7"/><circle cx="226.8" cy="298.2" r="8" fill="#c8c8c8" fill-opacity="0.4"/><circle cx="226.8" cy="298.2" r="5.05" fill="#4e4e4e" stroke="#ff00ff" stroke-width="2.7"/><circle cx="246.8" cy="277.6" r="8" fill="#c8c8c8" fill-opacity="0.4"/><circle cx="246.8" cy="277.6" r="5.05" fill="#4e4e4e" stroke="#ff00ff" stroke-width="2.7"/><rect x="263" y="248" width="44" height="59" stroke="#ffff00" stroke-width="2" fill="none"/><circle cx="274.7" cy="257.0" r="8" fill="#c8c8c8" fill-opacity="0.4"/><circle cx="274.7" cy="257.0" r="5.05" fill="#4e4e4e" stroke="#ffff00" stroke-width="2.7"/><rect x="309" y="248" width="44" height="59" stroke="#ff7f50" stroke-width="2" fill="none"/><circle cx="322.6" cy="257.0" r="8" fill="#c8c8c8" fill-opacity="0.4"/><circle cx="322.6" cy="257.0" r="5.05" fill="#4e4e4e" stroke="#ff7f50" stroke-width="2.7"/><circle cx="322.6" cy="298.2" r="8" fill="#c8c8c8" fill-opacity="0.4"/><circle cx="322.6" cy="298.2" r="5.05" fill="#4e4e4e" stroke="#ff7f50" stroke-width="2.7"/><circle cx="342.6" cy="257.0" r="8" fill="#c8c8c8" fill-opacity="0.4"/><circle cx="342.6" cy="257.0" r="5.05" fill="#4e4e4e" stroke="#ff7f50" stroke-width="2.7"/><circle cx="342.6" cy="277.6" r="8" fill="#c8c8c8" fill-opacity="0.4"/><circle cx="342.6" cy="277.6" r="5.05" fill="#4e4e4e" stroke="#ff7f50" stroke-width="2.7"/><circle cx="342.6" cy="298.2" r="8" fill="#c8c8c8" fill-opacity="0.4"/><circle cx="342.6" cy="298.2" r="5.05" fill="#4e4e4e" stroke="#ff7f50" stroke-width="2.7"/></svg><div style="left:129px;top:362px;width:25px;height:18px;background:#fcebd8;border-radius:3px;box-shadow:2px 2px 0 #e4933c;font-family:Liberation Mono,monospace;font-weight:bold;font-size:13px;line-height:20px;text-align:center;color:#000">c</div><div style="left:177px;top:362px;width:25px;height:18px;background:#fcebd8;border-radius:3px;box-shadow:2px 2px 0 #e4933c;font-family:Liberation Mono,monospace;font-weight:bold;font-size:13px;line-height:20px;text-align:center;color:#000">a</div><div style="left:225px;top:362px;width:25px;height:18px;background:#fcebd8;border-radius:3px;box-shadow:2px 2px 0 #e4933c;font-family:Liberation Mono,monospace;font-weight:bold;font-size:13px;line-height:20px;text-align:center;color:#000">n</div><div style="left:272px;top:362px;width:25px;height:18px;background:#fcebd8;border-radius:3px;box-shadow:2px 2px 0 #e4933c;font-family:Liberation Mono,monospace;font-weight:bold;font-size:13px;line-height:20px;text-align:center;color:#000">e</div><div style="left:320px;top:362px;width:25px;height:18px;background:#fcebd8;border-radius:3px;box-shadow:2px 2px 0 #e4933c;font-family:Liberation Mono,monospace;font-weight:bold;font-size:13px;line-height:20px;text-align:center;color:#000">s</div><div style="left:367px;top:362px;width:25px;height:18px;background:#fcebd8;border-radius:3px;box-shadow:2px 2px 0 #e4933c;font-family:Liberation Mono,monospace;font-weight:bold;font-size:13px;line-height:20px;text-align:center;color:#000">t</div><div style="left:414px;top:362px;width:25px;height:18px;background:#fcebd8;border-radius:3px;box-shadow:2px 2px 0 #e4933c;font-family:Liberation Mono,monospace;font-weight:bold;font-size:13px;line-height:20px;text-align:center;color:#000">e</div><div style="left:461px;top:362px;width:25px;height:18px;background:#fcebd8;border-radius:3px;box-shadow:2px 2px 0 #e4933c;font-family:Liberation Mono,monospace;font-weight:bold;font-size:13px;line-height:20px;text-align:center;color:#000">n</div><div style="left:556px;top:362px;width:25px;height:18px;background:#fcebd8;border-radius:3px;box-shadow:2px 2px 0 #e4933c;font-family:Liberation Mono,monospace;font-weight:bold;font-size:13px;line-height:20px;text-align:center;color:#000">e</div><div style="left:603px;top:362px;width:25px;height:18px;background:#fcebd8;border-radius:3px;box-shadow:2px 2px 0 #e4933c;font-family:Liberation Mono,monospace;font-weight:bold;font-size:13px;line-height:20px;text-align:center;color:#000">x</div><div style="left:651px;top:362px;width:25px;height:18px;background:#fcebd8;border-radius:3px;box-shadow:2px 2px 0 #e4933c;font-family:Liberation Mono,monospace;font-weight:bold;font-size:13px;line-height:20px;text-align:center;color:#000">t</div><div style="left:698px;top:362px;width:25px;height:18px;background:#fcebd8;border-radius:3px;box-shadow:2px 2px 0 #e4933c;font-family:Liberation Mono,monospace;font-weight:bold;font-size:13px;line-height:20px;text-align:center;color:#000">r</div><div style="left:745px;top:362px;width:25px;height:18px;background:#fcebd8;border-radius:3px;box-shadow:2px 2px 0 #e4933c;font-family:Liberation Mono,monospace;font-weight:bold;font-size:13px;line-height:20px;text-align:center;color:#000">a</div><div style="left:129px;top:443px;width:25px;height:18px;background:#fcebd8;border-radius:3px;box-shadow:2px 2px 0 #e4933c;font-family:Liberation Mono,monospace;font-weight:bold;font-size:13px;line-height:20px;text-align:center;color:#000">s</div><div style="left:177px;top:443px;width:25px;height:18px;background:#fcebd8;border-radius:3px;box-shadow:2px 2px 0 #e4933c;font-family:Liberation Mono,monospace;font-weight:bold;font-size:13px;line-height:20px;text-align:center;color:#000">p</div><div style="left:223px;top:443px;width:25px;height:18px;background:#fcebd8;border-radius:3px;box-shadow:2px 2px 0 #e4933c;font-family:Liberation Mono,monospace;font-weight:bold;font-size:13px;line-height:20px;text-align:center;color:#000">r</div><div style="left:270px;top:443px;width:25px;height:18px;background:#fcebd8;border-radius:3px;box-shadow:2px 2px 0 #e4933c;font-family:Liberation Mono,monospace;font-weight:bold;font-size:13px;line-height:20px;text-align:center;color:#000">a</div><div style="left:316px;top:443px;width:25px;height:18px;background:#fcebd8;border-radius:3px;box-shadow:2px 2px 0 #e4933c;font-family:Liberation Mono,monospace;font-weight:bold;font-size:13px;line-height:20px;text-align:center;color:#000">y</div><div style="left:19px;top:147px;width:65px;height:18px;background:#fcebd8;border-radius:3px;box-shadow:2px 2px 0 #e4933c;font-family:Liberation Mono,monospace;font-weight:bold;font-size:13px;line-height:18px;text-align:center;color:#000">Result</div><div style="left:1px;top:549px;width:1014px;height:463px;background:#fff;border:1px solid #cfcfcf;border-radius:3px"></div><div style="left:1px;top:549px;width:1014px;height:3px;background:#d6d9dc"></div><div style="left:500px;top:549px;width:18px;height:2px;background:repeating-linear-gradient(90deg,#888 0 1.5px,transparent 1.5px 3px)"></div><div style="left:3px;top:552px;width:975px;height:20px;background:linear-gradient(#dc7a1e 0,#ec8a28 3px,#f28d28 5px)"></div><div class="t" style="left:8px;top:555px;font-size:13.1px;color:#111">Variablenfenster - main () - Hauptthread: 3944</div><svg style="position:absolute;left:981px;top:557px;" width="12" height="12" viewBox="0 0 12 12" fill="none" stroke="#000" stroke-width="1.3"><rect x="0.5" y="0.5" width="11" height="11" rx="2" stroke="#666" stroke-width="1"/><rect x="2.5" y="5.5" width="4" height="4" stroke="#555" stroke-width="1"/><path d="M4.5 5.5V2.5H9.5V7.5H6.5" stroke="#555" stroke-width="1"/></svg><svg style="position:absolute;left:999px;top:557px;" width="12" height="12" viewBox="0 0 12 12" fill="none" stroke="#000" stroke-width="1.3"><rect x="0.5" y="0.5" width="11" height="11" rx="2" stroke="#666" stroke-width="1"/><path d="M3 3L9 9M9 3L3 9" stroke="#333" stroke-width="1"/></svg><div class="t" style="left:9px;top:581px;font-size:12.9px;color:#000">Ikonische Variablen</div><div style="left:8px;top:598px;width:998px;height:212px;border:1px solid #e4e4e4"></div><div style="left:9px;top:600px;width:996px;height:209px;border:1px solid #cacaca;border-right-color:#e0e0e0;border-bottom-color:#e0e0e0"></div><div style="left:15px;top:606px;width:70px;height:90px;background:#fff;border-right:1px solid #b4b4b4;border-bottom:1px solid #b4b4b4"></div><svg style="position:absolute;left:20px;top:608px;" width="60" height="60" viewBox="0 0 60 60" fill="none" stroke="#000" stroke-width="1.3"><g transform="scale(0.9375)" stroke="none"><rect width="64" height="64" fill="#929292"/><rect y="0" width="64" height="10" fill="#b5b5b5"/><rect x="2" y="10" width="61" height="49" fill="#7c7c7c"/><rect x="43" y="10" width="20" height="20" fill="#383838"/><text x="45" y="25" font-family="Liberation Sans" font-size="11" font-weight="bold" fill="#000" textLength="16" lengthAdjust="spacingAndGlyphs">Extra</text><text x="10" y="25" font-family="Liberation Sans" font-size="12" fill="#bababa" textLength="27" lengthAdjust="spacingAndGlyphs">Canesten</text><rect x="2" y="31" width="61" height="27" fill="#8a8a8a"/><rect x="2" y="33" width="14" height="1" fill="#a1a1a1"/><rect x="2" y="36" width="14" height="1" fill="#a1a1a1"/><rect x="2" y="39" width="14" height="1" fill="#a1a1a1"/><rect x="2" y="42" width="14" height="1" fill="#a1a1a1"/><rect x="2" y="45" width="14" height="1" fill="#a1a1a1"/><rect x="2" y="48" width="14" height="1" fill="#a1a1a1"/><rect x="2" y="51" width="14" height="1" fill="#a1a1a1"/><rect x="2" y="54" width="14" height="1" fill="#a1a1a1"/><rect x="2" y="57" width="14" height="1" fill="#a1a1a1"/><path d="M18 34V56M24 36V55M30 34V56M33 36V55" stroke="#1a1a1a" stroke-width="1.1" stroke-dasharray="2 1.5"/><path d="M50 33L62 40V56H56Z" fill="#9c9c9c"/><path d="M6 50L10 46L14 52M7 54H14" stroke="#222" stroke-width="1.3"/><rect y="58" width="64" height="6" fill="#a6a6a6"/><path d="M32 62H62" stroke="#222" stroke-width="1" stroke-dasharray="2 1"/></g></svg><div style="left:18px;top:656px;width:16px;height:16px;background:#f28d28"><svg style="position:absolute;left:0px;top:0px;" width="16" height="16" viewBox="0 0 16 16" fill="none" stroke="#000" stroke-width="1.3"><path d="M2.5 3H7V5.5H5.5V10.5H7V13H2.5Z M13.5 3H9V5.5H10.5V10.5H9V13H13.5Z" fill="#fff" stroke="none"/></svg></div><div class="t" style="left:18px;top:679px;font-size:13px;color:#000;width:62px;overflow:hidden">Images</div><div style="left:89px;top:606px;width:70px;height:90px;background:#fff;border-right:1px solid #b4b4b4;border-bottom:1px solid #b4b4b4"></div><svg style="position:absolute;left:92px;top:608px;" width="64" height="64" viewBox="0 0 64 64" fill="none" stroke="#000" stroke-width="1.3"><g transform="scale(1.0)" stroke="none"><rect width="64" height="64" fill="#8e8e8e"/><rect y="0" width="64" height="10" fill="#b1b1b1"/><rect x="2" y="10" width="61" height="49" fill="#787878"/><rect x="43" y="10" width="20" height="20" fill="#343434"/><text x="45" y="25" font-family="Liberation Sans" font-size="11" font-weight="bold" fill="#000" textLength="16" lengthAdjust="spacingAndGlyphs">Extra</text><text x="10" y="25" font-family="Liberation Sans" font-size="12" fill="#b6b6b6" textLength="27" lengthAdjust="spacingAndGlyphs">Canesten</text><rect x="2" y="31" width="61" height="27" fill="#868686"/><rect x="2" y="33" width="14" height="1" fill="#9d9d9d"/><rect x="2" y="36" width="14" height="1" fill="#9d9d9d"/><rect x="2" y="39" width="14" height="1" fill="#9d9d9d"/><rect x="2" y="42" width="14" height="1" fill="#9d9d9d"/><rect x="2" y="45" width="14" height="1" fill="#9d9d9d"/><rect x="2" y="48" width="14" height="1" fill="#9d9d9d"/><rect x="2" y="51" width="14" height="1" fill="#9d9d9d"/><rect x="2" y="54" width="14" height="1" fill="#9d9d9d"/><rect x="2" y="57" width="14" height="1" fill="#9d9d9d"/><path d="M18 34V56M24 36V55M30 34V56M33 36V55" stroke="#1a1a1a" stroke-width="1.1" stroke-dasharray="2 1.5"/><path d="M50 33L62 40V56H56Z" fill="#989898"/><path d="M6 50L10 46L14 52M7 54H14" stroke="#222" stroke-width="1.3"/><rect y="58" width="64" height="6" fill="#a2a2a2"/><path d="M32 62H62" stroke="#222" stroke-width="1" stroke-dasharray="2 1"/></g></svg><div class="t" style="left:92px;top:679px;font-size:13px;color:#000;width:62px;overflow:hidden">Image</div><div style="left:163px;top:606px;width:70px;height:90px;background:#fff;border-right:1px solid #b4b4b4;border-bottom:1px solid #b4b4b4"></div><svg style="position:absolute;left:166px;top:608px;" width="64" height="64" viewBox="0 0 64 64" fill="none" stroke="#000" stroke-width="1.3"><g transform="scale(1.0)" stroke="none"><rect width="64" height="64" fill="#868686"/><rect y="0" width="64" height="10" fill="#a9a9a9"/><rect x="2" y="10" width="61" height="49" fill="#707070"/><rect x="43" y="10" width="20" height="20" fill="#2c2c2c"/><text x="45" y="25" font-family="Liberation Sans" font-size="11" font-weight="bold" fill="#000" textLength="16" lengthAdjust="spacingAndGlyphs">Extra</text><text x="10" y="25" font-family="Liberation Sans" font-size="12" fill="#aeaeae" textLength="27" lengthAdjust="spacingAndGlyphs">Canesten</text><rect x="2" y="31" width="61" height="27" fill="#7e7e7e"/><rect x="2" y="33" width="14" height="1" fill="#959595"/><rect x="2" y="36" width="14" height="1" fill="#959595"/><rect x="2" y="39" width="14" height="1" fill="#959595"/><rect x="2" y="42" width="14" height="1" fill="#959595"/><rect x="2" y="45" width="14" height="1" fill="#959595"/><rect x="2" y="48" width="14" height="1" fill="#959595"/><rect x="2" y="51" width="14" height="1" fill="#959595"/><rect x="2" y="54" width="14" height="1" fill="#959595"/><rect x="2" y="57" width="14" height="1" fill="#959595"/><path d="M18 34V56M24 36V55M30 34V56M33 36V55" stroke="#1a1a1a" stroke-width="1.1" stroke-dasharray="2 1.5"/><path d="M50 33L62 40V56H56Z" fill="#909090"/><path d="M6 50L10 46L14 52M7 54H14" stroke="#222" stroke-width="1.3"/><rect y="58" width="64" height="6" fill="#9a9a9a"/><path d="M32 62H62" stroke="#222" stroke-width="1" stroke-dasharray="2 1"/></g></svg><div class="t" style="left:166px;top:679px;font-size:13px;color:#000;width:62px;overflow:hidden">ObjectSele</div><div style="left:237px;top:606px;width:70px;height:90px;background:#fff;border-right:1px solid #b4b4b4;border-bottom:1px solid #b4b4b4"></div><div style="left:240px;top:608px;width:64px;height:64px;background:#f28d28"><svg style="position:absolute;left:0px;top:0px;" width="64" height="64" viewBox="0 0 64 64" fill="none" stroke="#000" stroke-width="1.3"><path d="M20 14H28V18H25V46H28V50H20Z M44 14H36V18H39V46H36V50H44Z" fill="#fff" stroke="none"/></svg></div><div class="t" style="left:240px;top:679px;font-size:13px;color:#000;width:62px;overflow:hidden">HeightFiel</div><div style="left:311px;top:606px;width:70px;height:90px;background:#fff;border-right:1px solid #b4b4b4;border-bottom:1px solid #b4b4b4"></div><div class="t" style="left:314px;top:679px;font-size:13px;color:#000;width:62px;overflow:hidden">Gradient</div><div style="left:385px;top:606px;width:70px;height:90px;background:#fff;border-right:1px solid #b4b4b4;border-bottom:1px solid #b4b4b4"></div><svg style="position:absolute;left:388px;top:608px;" width="64" height="64" viewBox="0 0 64 64" fill="none" stroke="#000" stroke-width="1.3"><g transform="scale(1.0)" stroke="none"><rect width="64" height="64" fill="#a2a2a2"/><rect y="0" width="64" height="10" fill="#c5c5c5"/><rect x="2" y="10" width="61" height="49" fill="#8c8c8c"/><rect x="43" y="10" width="20" height="20" fill="#484848"/><text x="45" y="25" font-family="Liberation Sans" font-size="11" font-weight="bold" fill="#000" textLength="16" lengthAdjust="spacingAndGlyphs">Extra</text><text x="10" y="25" font-family="Liberation Sans" font-size="12" fill="#cacaca" textLength="27" lengthAdjust="spacingAndGlyphs">Canesten</text><rect x="2" y="31" width="61" height="27" fill="#9a9a9a"/><rect x="2" y="33" width="14" height="1" fill="#b1b1b1"/><rect x="2" y="36" width="14" height="1" fill="#b1b1b1"/><rect x="2" y="39" width="14" height="1" fill="#b1b1b1"/><rect x="2" y="42" width="14" height="1" fill="#b1b1b1"/><rect x="2" y="45" width="14" height="1" fill="#b1b1b1"/><rect x="2" y="48" width="14" height="1" fill="#b1b1b1"/><rect x="2" y="51" width="14" height="1" fill="#b1b1b1"/><rect x="2" y="54" width="14" height="1" fill="#b1b1b1"/><rect x="2" y="57" width="14" height="1" fill="#b1b1b1"/><path d="M18 34V56M24 36V55M30 34V56M33 36V55" stroke="#1a1a1a" stroke-width="1.1" stroke-dasharray="2 1.5"/><path d="M50 33L62 40V56H56Z" fill="#acacac"/><path d="M6 50L10 46L14 52M7 54H14" stroke="#222" stroke-width="1.3"/><rect y="58" width="64" height="6" fill="#b6b6b6"/><path d="M32 62H62" stroke="#222" stroke-width="1" stroke-dasharray="2 1"/></g></svg><div class="t" style="left:388px;top:679px;font-size:13px;color:#000;width:62px;overflow:hidden">Albedo</div><div style="left:459px;top:606px;width:70px;height:90px;background:#fff;border-right:1px solid #b4b4b4;border-bottom:1px solid #b4b4b4"></div><svg style="position:absolute;left:462px;top:608px;" width="64" height="64" viewBox="0 0 64 64" fill="none" stroke="#000" stroke-width="1.3"><g transform="scale(1.0)" stroke="none"><rect width="64" height="64" fill="#a2a2a2"/><rect y="0" width="64" height="10" fill="#c5c5c5"/><rect x="2" y="10" width="61" height="49" fill="#8c8c8c"/><rect x="43" y="10" width="20" height="20" fill="#484848"/><text x="45" y="25" font-family="Liberation Sans" font-size="11" font-weight="bold" fill="#000" textLength="16" lengthAdjust="spacingAndGlyphs">Extra</text><text x="10" y="25" font-family="Liberation Sans" font-size="12" fill="#cacaca" textLength="27" lengthAdjust="spacingAndGlyphs">Canesten</text><rect x="2" y="31" width="61" height="27" fill="#9a9a9a"/><rect x="2" y="33" width="14" height="1" fill="#b1b1b1"/><rect x="2" y="36" width="14" height="1" fill="#b1b1b1"/><rect x="2" y="39" width="14" height="1" fill="#b1b1b1"/><rect x="2" y="42" width="14" height="1" fill="#b1b1b1"/><rect x="2" y="45" width="14" height="1" fill="#b1b1b1"/><rect x="2" y="48" width="14" height="1" fill="#b1b1b1"/><rect x="2" y="51" width="14" height="1" fill="#b1b1b1"/><rect x="2" y="54" width="14" height="1" fill="#b1b1b1"/><rect x="2" y="57" width="14" height="1" fill="#b1b1b1"/><path d="M18 34V56M24 36V55M30 34V56M33 36V55" stroke="#1a1a1a" stroke-width="1.1" stroke-dasharray="2 1.5"/><path d="M50 33L62 40V56H56Z" fill="#acacac"/><path d="M6 50L10 46L14 52M7 54H14" stroke="#222" stroke-width="1.3"/><rect y="58" width="64" height="6" fill="#b6b6b6"/><path d="M32 62H62" stroke="#222" stroke-width="1" stroke-dasharray="2 1"/></g></svg><div class="t" style="left:462px;top:679px;font-size:13px;color:#000;width:62px;overflow:hidden">AlbedoGW</div><div style="left:533px;top:606px;width:70px;height:90px;background:#fff;border-right:1px solid #b4b4b4;border-bottom:1px solid #b4b4b4"></div><svg style="position:absolute;left:536px;top:608px;" width="64" height="64" viewBox="0 0 64 64" fill="none" stroke="#000" stroke-width="1.3"><rect width="64" height="64" fill="#8f8f8f" stroke="none"/><path d="M0 10H64M0 57H64" stroke="#c8c8c8" stroke-width="2"/><path d="M0 12H64M0 59H64" stroke="#555" stroke-width="1"/><path d="M10 28H50M10 33H35M12 44H22M12 49H22" stroke="#a8a8a8" stroke-width="1.5" stroke-dasharray="2 2"/></svg><div class="t" style="left:536px;top:679px;font-size:13px;color:#000;width:62px;overflow:hidden">MeanCurv</div><div style="left:607px;top:606px;width:70px;height:90px;background:#fbf1e7;border-right:1px solid #b4b4b4;border-bottom:1px solid #b4b4b4"></div><svg style="position:absolute;left:610px;top:608px;" width="64" height="64" viewBox="0 0 64 64" fill="none" stroke="#000" stroke-width="1.3"><rect width="64" height="64" fill="#000" stroke="none"/><rect x="1.5" y="21.5" width="61" height="19" stroke="#fff" stroke-width="1.2"/><path d="M40 41H64" stroke="#fff" stroke-width="1.5" stroke-dasharray="2 1"/><rect x="6" y="31" width="2" height="2" fill="#fff" stroke="none"/><rect x="10" y="28" width="2" height="2" fill="#fff" stroke="none"/><rect x="15" y="29" width="2" height="2" fill="#fff" stroke="none"/><rect x="18" y="30" width="2" height="2" fill="#fff" stroke="none"/><rect x="21" y="28" width="2" height="2" fill="#fff" stroke="none"/><rect x="24" y="29" width="2" height="2" fill="#fff" stroke="none"/><rect x="27" y="29" width="2" height="2" fill="#fff" stroke="none"/><rect x="32" y="31" width="2" height="2" fill="#fff" stroke="none"/><rect x="35" y="28" width="2" height="2" fill="#fff" stroke="none"/><rect x="38" y="31" width="2" height="2" fill="#fff" stroke="none"/><rect x="41" y="31" width="2" height="2" fill="#fff" stroke="none"/><rect x="45" y="31" width="2" height="2" fill="#fff" stroke="none"/><rect x="48" y="30" width="2" height="2" fill="#fff" stroke="none"/><rect x="6" y="36" width="2" height="2" fill="#fff" stroke="none"/><rect x="9" y="36" width="2" height="2" fill="#fff" stroke="none"/><rect x="12" y="36" width="2" height="2" fill="#fff" stroke="none"/><rect x="16" y="35" width="2" height="2" fill="#fff" stroke="none"/><rect x="20" y="37" width="2" height="2" fill="#fff" stroke="none"/><rect x="24" y="37" width="2" height="2" fill="#fff" stroke="none"/></svg><div class="t" style="left:610px;top:679px;font-size:13px;color:#000;width:62px;overflow:hidden">Regions</div><div style="left:681px;top:606px;width:70px;height:90px;background:#fbf1e7;border-right:1px solid #b4b4b4;border-bottom:1px solid #b4b4b4"></div><svg style="position:absolute;left:686px;top:608px;" width="60" height="60" viewBox="0 0 60 60" fill="none" stroke="#000" stroke-width="1.3"><rect width="60" height="60" fill="#000" stroke="none"/><path d="M0 23H60V26H58L57 28H40V29H30V28H20V29H10V26H0Z" fill="#f00" stroke="none"/><path d="M0 31H20L21 36H16V37H6V36H0Z" fill="#0f0" stroke="none"/></svg><div style="left:684px;top:656px;width:16px;height:16px;background:#f28d28"><svg style="position:absolute;left:0px;top:0px;" width="16" height="16" viewBox="0 0 16 16" fill="none" stroke="#000" stroke-width="1.3"><path d="M2.5 3H7V5.5H5.5V10.5H7V13H2.5Z M13.5 3H9V5.5H10.5V10.5H9V13H13.5Z" fill="#fff" stroke="none"/></svg></div><div class="t" style="left:684px;top:679px;font-size:13px;color:#000;width:62px;overflow:hidden">Connectec</div><div style="left:755px;top:606px;width:70px;height:90px;background:#fbf1e7;border-right:1px solid #b4b4b4;border-bottom:1px solid #b4b4b4"></div><svg style="position:absolute;left:760px;top:608px;" width="60" height="60" viewBox="0 0 60 60" fill="none" stroke="#000" stroke-width="1.3"><rect width="60" height="60" fill="#000" stroke="none"/><rect x="1" y="20.5" width="58" height="18" stroke="#f0f" stroke-width="1"/><path d="M1 20.5H59" stroke="#f00" stroke-width="1" stroke-dasharray="3 2"/><path d="M1 38.5H59" stroke="#00f" stroke-width="1" stroke-dasharray="4 3"/><path d="M1 20V39" stroke="#00f" stroke-width="1"/><rect x="6" y="26" width="2" height="2" fill="#f00" stroke="none"/><rect x="9" y="27" width="2" height="2" fill="#0f0" stroke="none"/><rect x="12" y="26" width="2" height="2" fill="#00f" stroke="none"/><rect x="17" y="27" width="2" height="2" fill="#0ff" stroke="none"/><rect x="20" y="28" width="2" height="2" fill="#f0f" stroke="none"/><rect x="23" y="28" width="2" height="2" fill="#ff0" stroke="none"/><rect x="28" y="25" width="2" height="2" fill="#ff7f50" stroke="none"/><rect x="31" y="25" width="2" height="2" fill="#00ff7f" stroke="none"/><rect x="36" y="28" width="2" height="2" fill="#f00" stroke="none"/><rect x="41" y="28" width="2" height="2" fill="#0f0" stroke="none"/><rect x="44" y="26" width="2" height="2" fill="#00f" stroke="none"/><rect x="47" y="28" width="2" height="2" fill="#0ff" stroke="none"/><rect x="6" y="33" width="2" height="2" fill="#f0f" stroke="none"/><rect x="9" y="31" width="2" height="2" fill="#ff0" stroke="none"/><rect x="13" y="32" width="2" height="2" fill="#ff7f50" stroke="none"/><rect x="18" y="32" width="2" height="2" fill="#00ff7f" stroke="none"/><rect x="21" y="34" width="2" height="2" fill="#f00" stroke="none"/><rect x="26" y="33" width="2" height="2" fill="#0f0" stroke="none"/></svg><div style="left:758px;top:656px;width:16px;height:16px;background:#f28d28"><svg style="position:absolute;left:0px;top:0px;" width="16" height="16" viewBox="0 0 16 16" fill="none" stroke="#000" stroke-width="1.3"><path d="M2.5 3H7V5.5H5.5V10.5H7V13H2.5Z M13.5 3H9V5.5H10.5V10.5H9V13H13.5Z" fill="#fff" stroke="none"/></svg></div><div class="t" style="left:758px;top:679px;font-size:13px;color:#000;width:62px;overflow:hidden">RegionDila</div><div style="left:829px;top:606px;width:70px;height:90px;background:#fbf1e7;border-right:1px solid #b4b4b4;border-bottom:1px solid #b4b4b4"></div><svg style="position:absolute;left:834px;top:608px;" width="60" height="60" viewBox="0 0 60 60" fill="none" stroke="#000" stroke-width="1.3"><rect width="60" height="60" fill="#000" stroke="none"/><rect x="0" y="26" width="2" height="2" fill="#f00" stroke="none"/><rect x="3" y="27" width="2" height="2" fill="#0f0" stroke="none"/><rect x="6" y="26" width="2" height="2" fill="#00f" stroke="none"/><rect x="11" y="27" width="2" height="2" fill="#0ff" stroke="none"/><rect x="14" y="28" width="2" height="2" fill="#f0f" stroke="none"/><rect x="17" y="28" width="2" height="2" fill="#ff0" stroke="none"/><rect x="22" y="25" width="2" height="2" fill="#ff7f50" stroke="none"/><rect x="25" y="25" width="2" height="2" fill="#00ff7f" stroke="none"/><rect x="30" y="28" width="2" height="2" fill="#f00" stroke="none"/><rect x="35" y="28" width="2" height="2" fill="#0f0" stroke="none"/><rect x="38" y="26" width="2" height="2" fill="#00f" stroke="none"/><rect x="41" y="28" width="2" height="2" fill="#0ff" stroke="none"/><rect x="44" y="27" width="2" height="2" fill="#f0f" stroke="none"/><rect x="47" y="25" width="2" height="2" fill="#ff0" stroke="none"/><rect x="52" y="26" width="2" height="2" fill="#ff7f50" stroke="none"/><rect x="55" y="25" width="2" height="2" fill="#00ff7f" stroke="none"/><rect x="0" y="35" width="2" height="2" fill="#f00" stroke="none"/><rect x="3" y="33" width="2" height="2" fill="#0f0" stroke="none"/><rect x="7" y="33" width="2" height="2" fill="#00f" stroke="none"/><rect x="11" y="34" width="2" height="2" fill="#0ff" stroke="none"/><rect x="14" y="35" width="2" height="2" fill="#f0f" stroke="none"/><rect x="18" y="34" width="2" height="2" fill="#ff0" stroke="none"/><rect x="21" y="34" width="2" height="2" fill="#ff7f50" stroke="none"/><rect x="25" y="34" width="2" height="2" fill="#00ff7f" stroke="none"/></svg><div style="left:832px;top:656px;width:16px;height:16px;background:#f28d28"><svg style="position:absolute;left:0px;top:0px;" width="16" height="16" viewBox="0 0 16 16" fill="none" stroke="#000" stroke-width="1.3"><path d="M2.5 3H7V5.5H5.5V10.5H7V13H2.5Z M13.5 3H9V5.5H10.5V10.5H9V13H13.5Z" fill="#fff" stroke="none"/></svg></div><div class="t" style="left:832px;top:679px;font-size:13px;color:#000;width:62px;overflow:hidden">Braille</div><div style="left:903px;top:606px;width:70px;height:90px;background:#fbf1e7;border-right:1px solid #b4b4b4;border-bottom:1px solid #b4b4b4"></div><svg style="position:absolute;left:906px;top:608px;" width="64" height="64" viewBox="0 0 64 64" fill="none" stroke="#000" stroke-width="1.3"><rect width="64" height="64" fill="#000" stroke="none"/><rect x="0" y="27" width="2" height="2" fill="#fff" stroke="none"/><rect x="3" y="28" width="2" height="2" fill="#fff" stroke="none"/><rect x="8" y="30" width="2" height="2" fill="#fff" stroke="none"/><rect x="13" y="30" width="2" height="2" fill="#fff" stroke="none"/><rect x="18" y="29" width="2" height="2" fill="#fff" stroke="none"/><rect x="21" y="28" width="2" height="2" fill="#fff" stroke="none"/><rect x="25" y="30" width="2" height="2" fill="#fff" stroke="none"/><rect x="28" y="28" width="2" height="2" fill="#fff" stroke="none"/><rect x="33" y="27" width="2" height="2" fill="#fff" stroke="none"/><rect x="36" y="30" width="2" height="2" fill="#fff" stroke="none"/><rect x="40" y="30" width="2" height="2" fill="#fff" stroke="none"/><rect x="44" y="30" width="2" height="2" fill="#fff" stroke="none"/><rect x="49" y="28" width="2" height="2" fill="#fff" stroke="none"/><rect x="53" y="28" width="2" height="2" fill="#fff" stroke="none"/><rect x="58" y="29" width="2" height="2" fill="#fff" stroke="none"/><rect x="61" y="29" width="2" height="2" fill="#fff" stroke="none"/><rect x="0" y="36" width="2" height="2" fill="#fff" stroke="none"/><rect x="4" y="39" width="2" height="2" fill="#fff" stroke="none"/><rect x="7" y="37" width="2" height="2" fill="#fff" stroke="none"/><rect x="10" y="39" width="2" height="2" fill="#fff" stroke="none"/><rect x="14" y="38" width="2" height="2" fill="#fff" stroke="none"/><rect x="19" y="38" width="2" height="2" fill="#fff" stroke="none"/><rect x="22" y="39" width="2" height="2" fill="#fff" stroke="none"/><rect x="27" y="38" width="2" height="2" fill="#fff" stroke="none"/></svg><div class="t" style="left:906px;top:679px;font-size:13px;color:#000;width:62px;overflow:hidden">RegionUni</div><div style="left:15px;top:702px;width:70px;height:90px;background:#fbf1e7;border-right:1px solid #b4b4b4;border-bottom:1px solid #b4b4b4"></div><svg style="position:absolute;left:18px;top:704px;" width="64" height="64" viewBox="0 0 64 64" fill="none" stroke="#000" stroke-width="1.3"><rect width="64" height="64" fill="#000" stroke="none"/><path d="M0 26H64V28H62L61 30H50V31H36V30H26V31H10V29H9V28H0Z" fill="#fff" stroke="none"/><rect x="0" y="33" width="22" height="6" fill="#fff" stroke="none"/><rect x="0" y="32" width="2" height="2" fill="#fff" stroke="none"/></svg><div class="t" style="left:18px;top:775px;font-size:13px;color:#000;width:62px;overflow:hidden">RegionClo</div><div style="left:89px;top:702px;width:70px;height:90px;background:#fbf1e7;border-right:1px solid #b4b4b4;border-bottom:1px solid #b4b4b4"></div><svg style="position:absolute;left:94px;top:704px;" width="60" height="60" viewBox="0 0 60 60" fill="none" stroke="#000" stroke-width="1.3"><rect width="60" height="60" fill="#000" stroke="none"/><rect x="0" y="23" width="59" height="6" fill="#f00" stroke="none"/><rect x="0" y="31" width="21" height="6" fill="#0f0" stroke="none"/></svg><div style="left:92px;top:752px;width:16px;height:16px;background:#f28d28"><svg style="position:absolute;left:0px;top:0px;" width="16" height="16" viewBox="0 0 16 16" fill="none" stroke="#000" stroke-width="1.3"><path d="M2.5 3H7V5.5H5.5V10.5H7V13H2.5Z M13.5 3H9V5.5H10.5V10.5H9V13H13.5Z" fill="#fff" stroke="none"/></svg></div><div class="t" style="left:92px;top:775px;font-size:13px;color:#000;width:62px;overflow:hidden">RegionTra</div><div style="left:163px;top:702px;width:70px;height:90px;background:#fbf1e7;border-right:1px solid #b4b4b4;border-bottom:1px solid #b4b4b4"></div><svg style="position:absolute;left:168px;top:704px;" width="60" height="60" viewBox="0 0 60 60" fill="none" stroke="#000" stroke-width="1.3"><rect width="60" height="60" fill="#000" stroke="none"/><rect x="0" y="23" width="59" height="6" fill="#f00" stroke="none"/><rect x="0" y="31" width="21" height="6" fill="#0f0" stroke="none"/></svg><div style="left:166px;top:752px;width:16px;height:16px;background:#f28d28"><svg style="position:absolute;left:0px;top:0px;" width="16" height="16" viewBox="0 0 16 16" fill="none" stroke="#000" stroke-width="1.3"><path d="M2.5 3H7V5.5H5.5V10.5H7V13H2.5Z M13.5 3H9V5.5H10.5V10.5H9V13H13.5Z" fill="#fff" stroke="none"/></svg></div><div class="t" style="left:166px;top:775px;font-size:13px;color:#000;width:62px;overflow:hidden">SelectedR</div><div style="left:237px;top:702px;width:70px;height:90px;background:#fbf1e7;border-right:1px solid #b4b4b4;border-bottom:1px solid #b4b4b4"></div><svg style="position:absolute;left:242px;top:704px;" width="60" height="60" viewBox="0 0 60 60" fill="none" stroke="#000" stroke-width="1.3"><rect width="60" height="60" fill="#000" stroke="none"/><rect x="0" y="23" width="59" height="6" fill="#f00" stroke="none"/><rect x="0" y="31" width="21" height="6" fill="#0f0" stroke="none"/></svg><div style="left:240px;top:752px;width:16px;height:16px;background:#f28d28"><svg style="position:absolute;left:0px;top:0px;" width="16" height="16" viewBox="0 0 16 16" fill="none" stroke="#000" stroke-width="1.3"><path d="M2.5 3H7V5.5H5.5V10.5H7V13H2.5Z M13.5 3H9V5.5H10.5V10.5H9V13H13.5Z" fill="#fff" stroke="none"/></svg></div><div class="t" style="left:240px;top:775px;font-size:13px;color:#000;width:62px;overflow:hidden">RegionDila</div><div style="left:311px;top:702px;width:70px;height:90px;background:#fbf1e7;border-right:1px solid #b4b4b4;border-bottom:1px solid #b4b4b4"></div><svg style="position:absolute;left:316px;top:704px;" width="60" height="60" viewBox="0 0 60 60" fill="none" stroke="#000" stroke-width="1.3"><rect width="60" height="60" fill="#000" stroke="none"/><rect x="0" y="23" width="59" height="6" fill="#f00" stroke="none"/><rect x="0" y="31" width="21" height="6" fill="#0f0" stroke="none"/></svg><div style="left:314px;top:752px;width:16px;height:16px;background:#f28d28"><svg style="position:absolute;left:0px;top:0px;" width="16" height="16" viewBox="0 0 16 16" fill="none" stroke="#000" stroke-width="1.3"><path d="M2.5 3H7V5.5H5.5V10.5H7V13H2.5Z M13.5 3H9V5.5H10.5V10.5H9V13H13.5Z" fill="#fff" stroke="none"/></svg></div><div class="t" style="left:314px;top:775px;font-size:13px;color:#000;width:62px;overflow:hidden">RectanglE</div><div style="left:385px;top:702px;width:70px;height:90px;background:#fbf1e7;border-right:1px solid #b4b4b4;border-bottom:1px solid #b4b4b4"></div><svg style="position:absolute;left:390px;top:704px;" width="60" height="60" viewBox="0 0 60 60" fill="none" stroke="#000" stroke-width="1.3"><rect width="60" height="60" fill="#000" stroke="none"/><rect x="0" y="23" width="5" height="7" fill="#f00" stroke="none"/><rect x="5" y="23" width="5" height="7" fill="#0f0" stroke="none"/><rect x="10" y="23" width="5" height="7" fill="#00f" stroke="none"/><rect x="15" y="23" width="5" height="7" fill="#0ff" stroke="none"/><rect x="20" y="23" width="5" height="7" fill="#f0f" stroke="none"/><rect x="25" y="23" width="5" height="7" fill="#ff0" stroke="none"/><rect x="30" y="23" width="5" height="7" fill="#ff7f50" stroke="none"/><rect x="35" y="23" width="5" height="7" fill="#00ff7f" stroke="none"/><rect x="40" y="23" width="5" height="7" fill="#f00" stroke="none"/><rect x="45" y="23" width="5" height="7" fill="#0f0" stroke="none"/><rect x="50" y="23" width="5" height="7" fill="#00f" stroke="none"/><rect x="55" y="23" width="5" height="7" fill="#0ff" stroke="none"/><rect x="0" y="30" width="5" height="7" fill="#0ff" stroke="none"/><rect x="5" y="30" width="5" height="7" fill="#f0f" stroke="none"/><rect x="10" y="30" width="5" height="7" fill="#ff0" stroke="none"/><rect x="15" y="30" width="5" height="7" fill="#ff7f50" stroke="none"/><rect x="20" y="30" width="5" height="7" fill="#00ff7f" stroke="none"/></svg><div style="left:388px;top:752px;width:16px;height:16px;background:#f28d28"><svg style="position:absolute;left:0px;top:0px;" width="16" height="16" viewBox="0 0 16 16" fill="none" stroke="#000" stroke-width="1.3"><path d="M2.5 3H7V5.5H5.5V10.5H7V13H2.5Z M13.5 3H9V5.5H10.5V10.5H9V13H13.5Z" fill="#fff" stroke="none"/></svg></div><div class="t" style="left:388px;top:775px;font-size:13px;color:#000;width:62px;overflow:hidden">Partitionec</div><div style="left:459px;top:702px;width:70px;height:90px;background:#fbf1e7;border-right:1px solid #b4b4b4;border-bottom:1px solid #b4b4b4"></div><svg style="position:absolute;left:464px;top:704px;" width="60" height="60" viewBox="0 0 60 60" fill="none" stroke="#000" stroke-width="1.3"><rect width="60" height="60" fill="#000" stroke="none"/><rect x="8" y="31" width="2" height="2" fill="#f00" stroke="none"/><rect x="11" y="32" width="2" height="2" fill="#0f0" stroke="none"/><rect x="16" y="34" width="2" height="2" fill="#00f" stroke="none"/><rect x="21" y="34" width="2" height="2" fill="#0ff" stroke="none"/><rect x="26" y="33" width="2" height="2" fill="#f0f" stroke="none"/><rect x="29" y="32" width="2" height="2" fill="#ff0" stroke="none"/><rect x="33" y="34" width="2" height="2" fill="#ff7f50" stroke="none"/><rect x="36" y="32" width="2" height="2" fill="#00ff7f" stroke="none"/><rect x="41" y="31" width="2" height="2" fill="#f00" stroke="none"/><rect x="44" y="34" width="2" height="2" fill="#0f0" stroke="none"/><rect x="48" y="34" width="2" height="2" fill="#00f" stroke="none"/><rect x="52" y="34" width="2" height="2" fill="#0ff" stroke="none"/><rect x="57" y="32" width="2" height="2" fill="#f0f" stroke="none"/><rect x="8" y="39" width="2" height="2" fill="#ff0" stroke="none"/><rect x="12" y="40" width="2" height="2" fill="#ff7f50" stroke="none"/><rect x="17" y="39" width="2" height="2" fill="#00ff7f" stroke="none"/><rect x="21" y="38" width="2" height="2" fill="#f00" stroke="none"/><rect x="26" y="38" width="2" height="2" fill="#0f0" stroke="none"/></svg><div style="left:462px;top:752px;width:16px;height:16px;background:#f28d28"><svg style="position:absolute;left:0px;top:0px;" width="16" height="16" viewBox="0 0 16 16" fill="none" stroke="#000" stroke-width="1.3"><path d="M2.5 3H7V5.5H5.5V10.5H7V13H2.5Z M13.5 3H9V5.5H10.5V10.5H9V13H13.5Z" fill="#fff" stroke="none"/></svg></div><div class="t" style="left:462px;top:775px;font-size:13px;color:#000;width:62px;overflow:hidden">Letters</div><div style="left:533px;top:702px;width:70px;height:90px;background:#fbf1e7;border-right:1px solid #b4b4b4;border-bottom:1px solid #b4b4b4"></div><svg style="position:absolute;left:536px;top:704px;" width="64" height="64" viewBox="0 0 64 64" fill="none" stroke="#000" stroke-width="1.3"><rect width="64" height="64" fill="#000" stroke="none"/><rect x="10" y="2" width="46" height="60" fill="#fff" stroke="none"/></svg><div class="t" style="left:536px;top:775px;font-size:13px;color:#000;width:62px;overflow:hidden">CurrentRe</div><div style="left:607px;top:702px;width:70px;height:90px;background:#fbf1e7;border-right:1px solid #b4b4b4;border-bottom:1px solid #b4b4b4"></div><svg style="position:absolute;left:610px;top:704px;" width="64" height="64" viewBox="0 0 64 64" fill="none" stroke="#000" stroke-width="1.3"><rect width="64" height="64" fill="#000" stroke="none"/><circle cx="21" cy="11" r="6.5" fill="#fff" stroke="none"/><circle cx="43" cy="11" r="6.5" fill="#fff" stroke="none"/><circle cx="43" cy="33" r="6.5" fill="#fff" stroke="none"/><circle cx="21" cy="55" r="6.5" fill="#fff" stroke="none"/><circle cx="43" cy="55" r="6.5" fill="#fff" stroke="none"/></svg><div class="t" style="left:610px;top:775px;font-size:13px;color:#000;width:62px;overflow:hidden">CurrentLet</div><div style="left:681px;top:702px;width:70px;height:90px;background:#fbf1e7;border-right:1px solid #b4b4b4;border-bottom:1px solid #b4b4b4"></div><svg style="position:absolute;left:686px;top:704px;" width="60" height="60" viewBox="0 0 60 60" fill="none" stroke="#000" stroke-width="1.3"><rect width="60" height="60" fill="#000" stroke="none"/><circle cx="20" cy="10" r="5" fill="#0f0" stroke="none"/><circle cx="40" cy="10" r="5" fill="#f00" stroke="none"/><circle cx="40" cy="30" r="5" fill="#00f" stroke="none"/><circle cx="20" cy="50" r="5" fill="#0ff" stroke="none"/><circle cx="40" cy="50" r="5" fill="#f0f" stroke="none"/></svg><div style="left:684px;top:752px;width:16px;height:16px;background:#f28d28"><svg style="position:absolute;left:0px;top:0px;" width="16" height="16" viewBox="0 0 16 16" fill="none" stroke="#000" stroke-width="1.3"><path d="M2.5 3H7V5.5H5.5V10.5H7V13H2.5Z M13.5 3H9V5.5H10.5V10.5H9V13H13.5Z" fill="#fff" stroke="none"/></svg></div><div class="t" style="left:684px;top:775px;font-size:13px;color:#000;width:62px;overflow:hidden">Dots</div><div style="left:755px;top:702px;width:70px;height:90px;background:#fbf1e7;border-right:1px solid #b4b4b4;border-bottom:1px solid #b4b4b4"></div><svg style="position:absolute;left:758px;top:704px;" width="64" height="64" viewBox="0 0 64 64" fill="none" stroke="#000" stroke-width="1.3"><rect width="64" height="64" fill="#000" stroke="none"/><path d="M20 8H44V16H52V24H60V40H52V48H44V56H20V48H12V40H4V24H12V16H20Z" fill="#fff" stroke="none"/></svg><div class="t" style="left:758px;top:775px;font-size:13px;color:#000;width:62px;overflow:hidden">CurrentDo</div><div style="left:500px;top:811px;width:18px;height:1px;background:repeating-linear-gradient(90deg,#bbb 0 1px,transparent 1px 3px)"></div><div class="t" style="left:9px;top:819px;font-size:12.7px;color:#000">Steuervariablen</div><div style="left:8px;top:835px;width:998px;height:137px;border:1px solid #d4d4d4;background:#fff;overflow:hidden"></div><div style="left:10px;top:837px;width:153px;height:20px;background:linear-gradient(#f4f4f4,#e4e4e4);border:1px solid #c8c8c8;border-top-color:#f8f8f8;overflow:hidden"><div class="t" style="left:5px;top:2px;font-size:12.8px;color:#000">dot_max_area</div></div><div style="left:163px;top:837px;width:828px;height:20px;background:#ececec;overflow:hidden"><div class="t" style="left:3px;top:4px;font-family:Liberation Mono,monospace;font-size:11.9px;color:#000">92.6311</div></div><div style="left:10px;top:857px;width:153px;height:20px;background:linear-gradient(#f4f4f4,#e4e4e4);border:1px solid #c8c8c8;border-top-color:#f8f8f8;overflow:hidden"><div class="t" style="left:5px;top:2px;font-size:12.8px;color:#000">dot_min_roundness</div></div><div style="left:163px;top:857px;width:828px;height:20px;background:#cdcdcd;overflow:hidden"><div class="t" style="left:3px;top:4px;font-family:Liberation Mono,monospace;font-size:11.9px;color:#000">0.55</div></div><div style="left:10px;top:877px;width:153px;height:20px;background:linear-gradient(#f4f4f4,#e4e4e4);border:1px solid #c8c8c8;border-top-color:#f8f8f8;overflow:hidden"><div class="t" style="left:5px;top:2px;font-size:12.8px;color:#000">dot_pitch</div></div><div style="left:163px;top:877px;width:828px;height:20px;background:#ececec;overflow:hidden"><div class="t" style="left:3px;top:4px;font-family:Liberation Mono,monospace;font-size:11.9px;color:#000">12.8273</div></div><div style="left:10px;top:897px;width:153px;height:20px;background:linear-gradient(#f4f4f4,#e4e4e4);border:1px solid #c8c8c8;border-top-color:#f8f8f8;overflow:hidden"><div class="t" style="left:5px;top:2px;font-size:12.8px;color:#000">dot_diameter</div></div><div style="left:163px;top:897px;width:828px;height:20px;background:#cdcdcd;overflow:hidden"><div class="t" style="left:3px;top:4px;font-family:Liberation Mono,monospace;font-size:11.9px;color:#000">8.20946</div></div><div style="left:10px;top:917px;width:153px;height:20px;background:linear-gradient(#f4f4f4,#e4e4e4);border:1px solid #c8c8c8;border-top-color:#f8f8f8;overflow:hidden"><div class="t" style="left:5px;top:2px;font-size:12.8px;color:#000">letter_height</div></div><div style="left:163px;top:917px;width:828px;height:20px;background:#ececec;overflow:hidden"><div class="t" style="left:3px;top:4px;font-family:Liberation Mono,monospace;font-size:11.9px;color:#000">38.4818</div></div><div style="left:10px;top:937px;width:153px;height:20px;background:linear-gradient(#f4f4f4,#e4e4e4);border:1px solid #c8c8c8;border-top-color:#f8f8f8;overflow:hidden"><div class="t" style="left:5px;top:2px;font-size:12.8px;color:#000">letter_width</div></div><div style="left:163px;top:937px;width:828px;height:20px;background:#cdcdcd;overflow:hidden"><div class="t" style="left:3px;top:4px;font-family:Liberation Mono,monospace;font-size:11.9px;color:#000">30.7855</div></div><div style="left:10px;top:957px;width:153px;height:13px;background:linear-gradient(#f4f4f4,#e4e4e4);border:1px solid #c8c8c8;border-top-color:#f8f8f8;overflow:hidden"><div class="t" style="left:5px;top:2px;font-size:12.8px;color:#000">WindowHandle</div></div><div style="left:163px;top:957px;width:828px;height:13px;background:#ececec;overflow:hidden"><div class="t" style="left:3px;top:4px;font-family:Liberation Mono,monospace;font-size:11.9px;color:#000">H23370587170 (window)</div></div><div style="left:990px;top:837px;width:15px;height:133px;background:#e2e2e2;background-image:radial-gradient(#d0d0d0 0.5px,transparent 0.8px);background-size:3px 3px;border-left:1px solid #d0d0d0;border-right:1px solid #c8c8c8"></div><div style="left:991px;top:838px;width:13px;height:13px;background:#f6f6f6;border-bottom:1px solid #d8d8d8"><svg style="position:absolute;left:2px;top:4px;" width="9" height="5" viewBox="0 0 9 5" fill="none" stroke="#000" stroke-width="1.3"><path d="M0 5L4.5 1L9 5Z" fill="#444" stroke="none"/></svg></div><div style="left:991px;top:877px;width:13px;height:27px;background:#f8f8f8;border-top:1px solid #cfcfcf;border-bottom:1px solid #cfcfcf"></div><div style="left:991px;top:955px;width:13px;height:14px;background:#f6f6f6;border-top:1px solid #d8d8d8"><svg style="position:absolute;left:2px;top:4px;" width="9" height="5" viewBox="0 0 9 5" fill="none" stroke="#000" stroke-width="1.3"><path d="M0 0L4.5 4L9 0Z" fill="#444" stroke="none"/></svg></div><div style="left:8px;top:973px;width:1000px;height:6px;border:1px solid #c8c8c8;background:#fff"></div><div style="left:8px;top:977px;width:44px;height:26px;background:#fff;border:1px solid #c8c8c8;border-top:none;border-radius:0 0 3px 3px"><div class="t" style="left:11px;top:5px;font-size:13px">Alle</div></div><div style="left:52px;top:979px;width:51px;height:24px;background:linear-gradient(#e8e8e8,#dcdcdc);border:1px solid #c8c8c8;border-top:none;border-radius:0 0 3px 3px"><div class="t" style="left:0px;top:3px;font-size:13px;width:49px;text-align:center;color:#111">Auto</div></div><div style="left:103px;top:979px;width:82px;height:24px;background:linear-gradient(#e8e8e8,#dcdcdc);border:1px solid #c8c8c8;border-top:none;border-radius:0 0 3px 3px"><div class="t" style="left:0px;top:3px;font-size:13px;width:80px;text-align:center;color:#111">Anwender</div></div><div style="left:185px;top:979px;width:59px;height:24px;background:linear-gradient(#e8e8e8,#dcdcdc);border:1px solid #c8c8c8;border-top:none;border-radius:0 0 3px 3px"><div class="t" style="left:0px;top:3px;font-size:13px;width:57px;text-align:center;color:#111">Global</div></div><div style="left:1016px;top:77px;width:904px;height:1px;background:#cdcdcd"></div><div style="left:1016px;top:79px;width:904px;height:1px;background:#d6d6d6"></div><div style="left:1019px;top:84px;width:900px;height:928px;background:#fff;border:1px solid #cfcfcf;border-radius:4px"></div><div style="left:1021px;top:85px;width:862px;height:19px;background:#ebebeb"></div><div class="t" style="left:1026px;top:87px;font-size:13.1px;color:#000">Programmfenster - main () - Hauptthread: 3944</div><svg style="position:absolute;left:1886px;top:88px;" width="12" height="12" viewBox="0 0 12 12" fill="none" stroke="#000" stroke-width="1.3"><rect x="0.5" y="0.5" width="11" height="11" rx="2" stroke="#666" stroke-width="1"/><rect x="2.5" y="5.5" width="4" height="4" stroke="#555" stroke-width="1"/><path d="M4.5 5.5V2.5H9.5V7.5H6.5" stroke="#555" stroke-width="1"/></svg><svg style="position:absolute;left:1904px;top:88px;" width="12" height="12" viewBox="0 0 12 12" fill="none" stroke="#000" stroke-width="1.3"><rect x="0.5" y="0.5" width="11" height="11" rx="2" stroke="#666" stroke-width="1"/><path d="M3 3L9 9M9 3L3 9" stroke="#333" stroke-width="1"/></svg><svg style="position:absolute;left:1028px;top:116px;" width="16" height="13" viewBox="0 0 16 13" fill="none" stroke="#000" stroke-width="1.3"><path d="M1 6.5L7 1V4H15V9H7V12Z" stroke="#aaa" stroke-width="1.2" fill="#fff"/></svg><svg style="position:absolute;left:1052px;top:116px;" width="16" height="13" viewBox="0 0 16 13" fill="none" stroke="#000" stroke-width="1.3"><path d="M15 6.5L9 1V4H1V9H9V12Z" stroke="#aaa" stroke-width="1.2" fill="#fff"/></svg><svg style="position:absolute;left:1075px;top:114px;" width="18" height="16" viewBox="0 0 18 16" fill="none" stroke="#000" stroke-width="1.3"><rect x="1" y="3" width="15.5" height="12" stroke-width="1.5" fill="#fff"/><rect x="6" y="1" width="6" height="3" fill="#f0c000" stroke="#000" stroke-width="0.8"/><path d="M3.5 7H14M3.5 9.5H14M3.5 12H14" stroke-width="1.1"/></svg><div style="left:1096px;top:111px;width:678px;height:24px;background:linear-gradient(#fafafa,#ececec);border:1px solid #c4c4c4;border-radius:4px"></div><svg style="position:absolute;left:1102px;top:114px;" width="17" height="17" viewBox="0 0 17 17" fill="none" stroke="#000" stroke-width="1.3"><path d="M2 1H15V16H5 M2 1V9" stroke-width="2"/><path d="M7 4H12M7 7H12M7 10H11" stroke-width="1.1"/><path d="M1 12H6M4 10L6 12L4 14" stroke="#3a8a20" stroke-width="1.5"/></svg><div class="t" style="left:1121px;top:116px;font-size:13.1px;color:#000;word-spacing:1.7px">main ( : : : )</div><svg style="position:absolute;left:1757px;top:121px;" width="9" height="5" viewBox="0 0 9 5" fill="none" stroke="#000" stroke-width="1.3"><path d="M0 0H9L4.5 4Z" fill="#666" stroke="none"/></svg><svg style="position:absolute;left:1777px;top:113px;" width="18" height="18" viewBox="0 0 18 18" fill="none" stroke="#000" stroke-width="1.3"><path d="M1 1.5H7L9 4.5V7 M9 4.5H13L15 6.5V9" stroke-width="1.3"/><path d="M13 7.5L15 9.5L17 7.5" stroke-width="1.2"/><path d="M1 14H3" stroke-width="1.5"/><rect x="4.5" y="9.5" width="11" height="8" stroke-width="1.5"/><path d="M6 12H14" stroke-width="1.5"/><path d="M6.5 14.5H8M9.5 14.5H11M12 14.5H13.5" stroke-width="1.3"/></svg><svg style="position:absolute;left:1805px;top:113px;" width="17" height="18" viewBox="0 0 17 18" fill="none" stroke="#000" stroke-width="1.3"><path d="M4 1.5H9V7H11V10H2V7H4Z" stroke-width="1.4"/><path d="M6.5 10V15" stroke-width="1.4"/><path d="M10 12L15 17M15 12L10 17" stroke-width="1.4"/></svg><div style="left:1830px;top:111px;width:24px;height:24px;background:#dfdfdf;border:1px solid #d0d0d0;border-radius:3px"></div><div style="left:1855px;top:111px;width:12px;height:24px;background:#e6e6e6;border:1px solid #d6d6d6;border-radius:3px"></div><svg style="position:absolute;left:1857px;top:121px;" width="9" height="5" viewBox="0 0 9 5" fill="none" stroke="#000" stroke-width="1.3"><path d="M0 0H9L4.5 4Z" fill="#666" stroke="none"/></svg><svg style="position:absolute;left:1833px;top:113px;" width="17" height="18" viewBox="0 0 17 18" fill="none" stroke="#000" stroke-width="1.3"><circle cx="8" cy="10" r="6.8" stroke-width="1.4"/><path d="M6 1.5H10M8 1.5V3" stroke-width="1.6"/><path d="M13.5 3.5L15 5" stroke-width="1.2"/><path d="M8 10L12 6" stroke-width="1.4"/><circle cx="8" cy="10" r="1" fill="#000" stroke="none"/></svg><svg style="position:absolute;left:1869px;top:113px;" width="19" height="18" viewBox="0 0 19 18" fill="none" stroke="#000" stroke-width="1.3"><path d="M12 1L9 8" stroke-width="1.1"/><path d="M9 7C6 9 3 10 0 11C3 12 5 13 7 14L10 10Z" fill="#000" stroke="none"/><circle cx="13" cy="13" r="4" stroke-width="1.2" fill="#fff"/><path d="M11.5 8H14.5" stroke-width="1.2"/><path d="M13 13L15 11" stroke-width="1"/></svg><svg style="position:absolute;left:1893px;top:113px;" width="19" height="18" viewBox="0 0 19 18" fill="none" stroke="#000" stroke-width="1.3"><path d="M1 1.5H12.5V6 M1 1.5V17H9" stroke-width="1.6"/><path d="M3.5 5H5M6.5 5H10M3.5 8H5M6.5 8H10M3.5 11H5M6.5 11H9M3.5 14H5M6.5 14H8" stroke-width="1.2"/><circle cx="13.5" cy="13" r="4" stroke-width="1.2" fill="#fff"/><path d="M12 8H15" stroke-width="1.2"/><path d="M13.5 13L15.5 11" stroke-width="1"/></svg><div style="left:1024px;top:140px;width:890px;height:866px;background:#f9f9f9;border:1px solid #c4c4c4"></div><div style="left:1065px;top:141px;width:1px;height:850px;background:#8a8a8a"></div><div style="left:1788px;top:141px;width:4px;height:850px;background:#fff"></div><div style="left:1027px;top:141px;width:1px;height:850px;background:repeating-linear-gradient(#d8d8d8 0 1px,transparent 1px 3px)"></div><div style="left:1792px;top:318px;width:4px;height:14px;background:#a8a8a8"></div><div style="left:1792px;top:350px;width:96px;height:14px;background:#a8a8a8"></div><div style="left:1792px;top:365px;width:1px;height:16px;background:#999"></div><div style="left:1792px;top:478px;width:7px;height:14px;background:#a8a8a8"></div><div style="left:1792px;top:526px;width:4px;height:14px;background:#a8a8a8"></div><div style="left:1792px;top:670px;width:5px;height:14px;background:#a8a8a8"></div><div style="left:1792px;top:701px;width:1px;height:16px;background:#999"></div><div style="left:1792px;top:717px;width:1px;height:16px;background:#999"></div><div style="left:1792px;top:782px;width:13px;height:14px;background:#a8a8a8"></div><div style="left:1789px;top:557px;width:1px;height:16px;background:repeating-linear-gradient(#aaa 0 1px,transparent 1px 2px)"></div><div style="left:1030px;top:143px;width:33px;height:848px;font-family:Liberation Mono,monospace;font-size:11.9px;line-height:16px;white-space:nowrap;font-size:11px;color:#8a8a8a"><div style="top:0px;right:0">61</div><div style="top:16px;right:0">62</div><div style="top:32px;right:0">63</div><div style="top:48px;right:0">64</div><div style="top:64px;right:0">65</div><div style="top:80px;right:0">66</div><div style="top:96px;right:0">67</div><div style="top:112px;right:0">68</div><div style="top:128px;right:0">69</div><div style="top:144px;right:0">70</div><div style="top:160px;right:0">71</div><div style="top:176px;right:0">72</div><div style="top:192px;right:0">73</div><div style="top:208px;right:0">74</div><div style="top:224px;right:0">75</div><div style="top:240px;right:0">76</div><div style="top:256px;right:0">77</div><div style="top:272px;right:0">78</div><div style="top:288px;right:0">79</div><div style="top:304px;right:0">80</div><div style="top:320px;right:0">81</div><div style="top:336px;right:0">82</div><div style="top:352px;right:0">83</div><div style="top:368px;right:0">84</div><div style="top:384px;right:0">85</div><div style="top:400px;right:0">86</div><div style="top:416px;right:0">87</div><div style="top:432px;right:0">88</div><div style="top:448px;right:0">89</div><div style="top:464px;right:0">90</div><div style="top:480px;right:0">91</div><div style="top:496px;right:0">92</div><div style="top:512px;right:0">93</div><div style="top:528px;right:0">94</div><div style="top:544px;right:0">95</div><div style="top:560px;right:0">96</div><div style="top:576px;right:0">97</div><div style="top:592px;right:0">98</div><div style="top:608px;right:0">99</div><div style="top:624px;right:0">100</div><div style="top:640px;right:0">101</div><div style="top:656px;right:0">102</div><div style="top:672px;right:0">103</div><div style="top:688px;right:0">104</div><div style="top:704px;right:0">105</div><div style="top:720px;right:0">106</div><div style="top:736px;right:0">107</div><div style="top:752px;right:0">108</div><div style="top:768px;right:0">109</div><div style="top:784px;right:0">110</div><div style="top:800px;right:0">111</div><div style="top:816px;right:0">112</div><div style="top:832px;right:0">113</div></div><div style="left:1066px;top:142px;width:721px;height:848px;font-family:Liberation Mono,monospace;font-size:11.9px;line-height:16px;white-space:nowrap;overflow:hidden"><div style="top:0px;color:#009a00">*&nbsp;This&nbsp;code&nbsp;table&nbsp;maps&nbsp;between&nbsp;the&nbsp;hexadecimal&nbsp;representation</div><div style="top:16px;color:#009a00">*&nbsp;of&nbsp;the&nbsp;braille&nbsp;pattern&nbsp;and&nbsp;the&nbsp;corresponding&nbsp;character.</div><div style="top:32px;color:#009a00">*&nbsp;In&nbsp;this&nbsp;case&nbsp;a&nbsp;german&nbsp;6-dot&nbsp;code&nbsp;is&nbsp;used.</div><div style="top:48px;color:#5b3c00">CodeTable&nbsp;:=&nbsp;['&nbsp;','a',',','b','.','k',';','l','´','c','i','f','äu','m','s','p','','e',':','h','*','o','</div><div style="top:64px;color:#009a00">*&nbsp;&gt;&nbsp;bedeudet&nbsp;auch&nbsp;nachfolgend&nbsp;alles&nbsp;Großbuchstaben&nbsp;(CAPS)&nbsp;'&nbsp;wieder&nbsp;Kleinbuchstaben&nbsp;(lcase)</div><div style="top:80px;color:#009a00">*&nbsp;$&nbsp;nächstes&nbsp;Zeichen&nbsp;Großbuchstabe&nbsp;(Cap)&nbsp;z.B.&nbsp;vor&nbsp;Eigennamen</div><div style="top:96px;color:#8c8c8c">*&nbsp;#&nbsp;steht&nbsp;vor&nbsp;Zahlen</div><div style="top:112px;color:#009a00">*&nbsp;Show&nbsp;input&nbsp;images&nbsp;with&nbsp;different&nbsp;illumination</div><div style="top:128px;color:#5b3c00">for&nbsp;I&nbsp;:=&nbsp;1&nbsp;to&nbsp;4&nbsp;by&nbsp;1</div><div style="top:144px;color:#5b3c00">&nbsp;&nbsp;&nbsp;&nbsp;Message&nbsp;:=&nbsp;'Acquire&nbsp;image&nbsp;'&nbsp;+&nbsp;I&nbsp;+&nbsp;'&nbsp;of&nbsp;4'</div><div style="top:160px;color:#14149a">&nbsp;&nbsp;&nbsp;&nbsp;select_obj&nbsp;(Images,&nbsp;ObjectSelected,&nbsp;I)</div><div style="top:176px;color:#5b3c00">&nbsp;&nbsp;&nbsp;&nbsp;dev_display&nbsp;(ObjectSelected)</div><div style="top:192px;color:#1f63a6">&nbsp;&nbsp;&nbsp;&nbsp;disp_message&nbsp;(WindowHandle,&nbsp;Message,&nbsp;'window',&nbsp;12,&nbsp;12,&nbsp;'black',&nbsp;'true')</div><div style="top:208px;color:#14149a">&nbsp;&nbsp;&nbsp;&nbsp;wait_seconds&nbsp;(.1)</div><div style="top:224px;color:#5b3c00">endfor</div><div style="top:240px;color:#009a00">*</div><div style="top:256px;color:#009a00">*&nbsp;Apply&nbsp;photometric&nbsp;stereo&nbsp;to&nbsp;determine&nbsp;the&nbsp;albedo&nbsp;and&nbsp;compute&nbsp;the&nbsp;mean</div><div style="top:272px;color:#009a00">*&nbsp;curvature&nbsp;of&nbsp;the&nbsp;surface</div><div style="top:288px;color:#5b3c00">Tilts&nbsp;:=&nbsp;[90,0,270,180]</div><div style="top:304px;color:#5b3c00">Slants&nbsp;:=&nbsp;[45,45,45,45]</div><div style="top:320px;color:#5b3c00">ResultType&nbsp;:=&nbsp;['gradient','albedo']</div><div style="top:336px;color:#14149a">photometric_stereo&nbsp;(Images,&nbsp;HeightField,&nbsp;Gradient,&nbsp;Albedo,&nbsp;Slants,&nbsp;Tilts,&nbsp;ResultType,&nbsp;'poisson',&nbsp;[],&nbsp;[],&nbsp;HeightField)</div><div style="top:352px;color:#009a00">*</div><div style="top:368px;color:#009a00">*&nbsp;Display&nbsp;the&nbsp;albedo&nbsp;image</div><div style="top:384px;color:#5b3c00">dev_display&nbsp;(Albedo)</div><div style="top:400px;color:#14149a">scale_image_max(Albedo,&nbsp;AlbedoGW)</div><div style="top:416px;color:#8c8c8c">*disp_message&nbsp;(WindowHandle,&nbsp;'The&nbsp;albedo&nbsp;image&nbsp;still&nbsp;has&nbsp;some&nbsp;artefacts',&nbsp;'window',&nbsp;12,&nbsp;12,&nbsp;'black',&nbsp;'true')</div><div style="top:432px;color:#8c8c8c">*disp_continue_message&nbsp;(WindowHandle,&nbsp;'black',&nbsp;'true')</div><div style="top:448px;color:#8c8c8c">*stop&nbsp;()</div><div style="top:464px;color:#009a00">*</div><div style="top:480px;color:#009a00">*&nbsp;Calculate&nbsp;the&nbsp;mean&nbsp;curvature&nbsp;of&nbsp;the&nbsp;surface</div><div style="top:496px;color:#009a00">*&nbsp;using&nbsp;the&nbsp;gradient&nbsp;field&nbsp;as&nbsp;input&nbsp;for&nbsp;the&nbsp;operator</div><div style="top:512px;color:#009a00">*&nbsp;derivate_vector_field.</div><div style="top:528px;color:#14149a">derivate_vector_field&nbsp;(Gradient,&nbsp;MeanCurvature,&nbsp;1,&nbsp;'mean_curvature')</div><div style="top:544px;color:#5b3c00">if&nbsp;(rot_flag)</div><div style="top:560px;color:#14149a">&nbsp;&nbsp;rotate_image(MeanCurvature,&nbsp;MeanCurvature,&nbsp;180,&nbsp;'constant')&nbsp;&nbsp;//&nbsp;Schrift&nbsp;steht&nbsp;auf&nbsp;dem&nbsp;Kopf&nbsp;-&gt;&nbsp;umdrehen</div><div style="top:576px;color:#5b3c00">endif</div><div style="top:592px;color:#8c8c8c">*scale_image_max(MeanCurvature,&nbsp;MeanCurvatureGW)</div><div style="top:608px;color:#009a00">*</div><div style="top:624px;color:#009a00">*&nbsp;It&nbsp;is&nbsp;easy&nbsp;to&nbsp;segment&nbsp;the&nbsp;dots&nbsp;in&nbsp;the&nbsp;curvature&nbsp;image</div><div style="top:640px;color:#5b3c00">dev_display&nbsp;(MeanCurvature)</div><div style="top:656px;color:#1f63a6">disp_message&nbsp;(WindowHandle,&nbsp;'Krümmungsbild',&nbsp;'window',&nbsp;12,&nbsp;12,&nbsp;'black',&nbsp;'true')</div><div style="top:672px;color:#1f63a6">disp_continue_message&nbsp;(WindowHandle,&nbsp;'black',&nbsp;'true')</div><div style="top:688px;color:#5b3c00">stop&nbsp;()</div><div style="top:704px;color:#009a00">*</div><div style="top:720px;color:#009a00">*&nbsp;Segment&nbsp;dots</div><div style="top:736px;color:#14149a">threshold&nbsp;(MeanCurvature,&nbsp;Regions,&nbsp;-0.5,&nbsp;-0.04)&nbsp;//-0.14,&nbsp;-0.017)</div><div style="top:752px;color:#14149a">connection&nbsp;(Regions,&nbsp;ConnectedRegions)</div><div style="top:768px;color:#14149a">dilation_circle&nbsp;(ConnectedRegions,&nbsp;RegionDilation,&nbsp;1.5)</div><div style="top:784px;color:#14149a">select_shape&nbsp;(RegionDilation,&nbsp;Braille,&nbsp;['area','roundness'],&nbsp;'and',&nbsp;[dot_min_area,dot_min_roundness],&nbsp;[dot_max_area,1])</div><div style="top:800px;color:#14149a">union1&nbsp;(Braille,&nbsp;RegionUnion)</div><div style="top:816px;color:#009a00">*</div><div style="top:832px;color:#009a00">*&nbsp;---&nbsp;Group&nbsp;dots&nbsp;to&nbsp;words&nbsp;and&nbsp;characters&nbsp;---</div></div><div style="left:1792px;top:142px;width:104px;height:848px;font-family:Liberation Mono,monospace;font-size:11.9px;line-height:16px;white-space:nowrap;color:#000"><div style="top:48px;right:0px">0.033 ms</div><div style="top:128px;right:0px">0.036 ms</div><div style="top:144px;right:0px">0.068 ms</div><div style="top:160px;right:0px">0.050 ms</div><div style="top:176px;right:0px">4.228 ms</div><div style="top:192px;right:0px">0.918 ms</div><div style="top:208px;right:0px">100.062 ms</div><div style="top:224px;right:24px">-</div><div style="top:288px;right:0px">0.014 ms</div><div style="top:304px;right:0px">0.009 ms</div><div style="top:320px;right:0px">0.009 ms</div><div style="top:336px;right:0px">7.961 ms</div><div style="top:384px;right:0px">4.879 ms</div><div style="top:400px;right:0px">0.879 ms</div><div style="top:528px;right:0px">5.828 ms</div><div style="top:544px;right:0px">0.003 ms</div><div style="top:560px;right:24px">-</div><div style="top:576px;right:24px">-</div><div style="top:640px;right:0px">14.046 ms</div><div style="top:656px;right:0px">0.893 ms</div><div style="top:672px;right:0px">0.724 ms</div><div style="top:688px;right:0px">0.006 ms</div><div style="top:736px;right:0px">0.749 ms</div><div style="top:752px;right:0px">0.220 ms</div><div style="top:768px;right:0px">0.664 ms</div><div style="top:784px;right:0px">0.613 ms</div><div style="top:800px;right:0px">0.144 ms</div></div><div style="left:1898px;top:141px;width:15px;height:850px;background:#e3e3e3;background-image:radial-gradient(#d0d0d0 0.5px,transparent 0.8px);background-size:3px 3px;border-left:1px solid #c8c8c8;border-right:1px solid #b0b0b0"></div><div style="left:1899px;top:141px;width:13px;height:13px;background:#f4f4f4"><svg style="position:absolute;left:2px;top:4px;" width="9" height="5" viewBox="0 0 9 5" fill="none" stroke="#000" stroke-width="1.3"><path d="M0 5L4.5 1L9 5Z" fill="#444" stroke="none"/></svg></div><div style="left:1899px;top:386px;width:13px;height:211px;background:#f6f6f6;border-top:1px solid #c8c8c8;border-bottom:1px solid #c8c8c8"></div><div style="left:1899px;top:978px;width:13px;height:13px;background:#f4f4f4;border-top:1px solid #d0d0d0"><svg style="position:absolute;left:2px;top:4px;" width="9" height="5" viewBox="0 0 9 5" fill="none" stroke="#000" stroke-width="1.3"><path d="M0 0L4.5 4L9 0Z" fill="#444" stroke="none"/></svg></div><div style="left:1025px;top:991px;width:873px;height:14px;background:#e3e3e3;background-image:radial-gradient(#d0d0d0 0.5px,transparent 0.8px);background-size:3px 3px;border-top:1px solid #c8c8c8"></div><div style="left:1025px;top:991px;width:13px;height:14px;background:#f4f4f4"><svg style="position:absolute;left:4px;top:3px;" width="5" height="9" viewBox="0 0 5 9" fill="none" stroke="#000" stroke-width="1.3"><path d="M5 0L1 4.5L5 9Z" fill="#444" stroke="none"/></svg></div><div style="left:1039px;top:992px;width:314px;height:13px;background:#f4f4f4;border-right:1px solid #cfcfcf"></div><div style="left:1898px;top:991px;width:15px;height:14px;background:#f4f4f4"><svg style="position:absolute;left:5px;top:3px;" width="5" height="9" viewBox="0 0 5 9" fill="none" stroke="#000" stroke-width="1.3"><path d="M0 0L4 4.5L0 9Z" fill="#444" stroke="none"/></svg></div><svg style="position:absolute;left:2px;top:1018px;" width="16" height="16" viewBox="0 0 16 16" fill="none" stroke="#000" stroke-width="1.3"><rect x="0.0" y="0.0" width="5" height="5" fill="#f28d28" stroke="none"/><rect x="5.5" y="0.0" width="5" height="5" fill="#8a8a8a" stroke="none"/><rect x="11.0" y="0.0" width="5" height="5" fill="#8a8a8a" stroke="none"/><rect x="0.0" y="5.5" width="5" height="5" fill="#8a8a8a" stroke="none"/><rect x="11.0" y="5.5" width="5" height="5" fill="#8a8a8a" stroke="none"/><rect x="0.0" y="11.0" width="5" height="5" fill="#8a8a8a" stroke="none"/><rect x="5.5" y="11.0" width="5" height="5" fill="#8a8a8a" stroke="none"/><rect x="11.0" y="11.0" width="5" height="5" fill="#8a8a8a" stroke="none"/></svg><div class="t" style="left:27px;top:1020px;font-size:12.93px;color:#000">Programm 'E:/home/Programmierung/Halcon/Brailleschriftlesung mit Radiometric Stereo/FF_read_braille_photometric_stereo.hdev' gespeichert</div><div class="t" style="left:1295px;top:1020px;font-size:13.4px;color:#000">[0] MeanCurvature (#=1: 640×250×1×real)</div><svg style="position:absolute;left:1564px;top:1016px;" width="19" height="19" viewBox="0 0 19 19" fill="none" stroke="#000" stroke-width="1.3"><circle cx="9.5" cy="10.5" r="7" stroke-width="1.4"/><path d="M7.5 2H11.5" stroke-width="1.5"/><path d="M9.5 10.5L12.5 7" stroke-width="1.3"/><path d="M15 4L16.5 5.5" stroke-width="1.2"/></svg><div class="t" style="left:1591px;top:1020px;font-size:13px">-</div><svg style="position:absolute;left:1676px;top:1017px;" width="11" height="18" viewBox="0 0 11 18" fill="none" stroke="#000" stroke-width="1.3"><rect x="0.5" y="0.5" width="10" height="17" fill="#222" stroke="none"/><rect x="2" y="2" width="7" height="4.5" fill="#e00" stroke="none"/><rect x="2" y="6.5" width="7" height="4.5" fill="#0c0" stroke="none"/><rect x="2" y="11" width="7" height="4.5" fill="#00e" stroke="none"/></svg><div class="t" style="left:1697px;top:1020px;font-size:13px">0</div><svg style="position:absolute;left:1765px;top:1016px;" width="20" height="20" viewBox="0 0 20 20" fill="none" stroke="#000" stroke-width="1.3"><path d="M4 1V13H15 M1 4H12V16" stroke-width="1.3"/><path d="M15 4L17 6" stroke-width="1.1"/><text x="5" y="19" font-size="7" font-family="Liberation Sans" font-weight="bold" fill="#000" stroke="none">R</text><text x="14" y="11" font-size="7" font-family="Liberation Sans" fill="#000" stroke="none">C</text></svg><div class="t" style="left:1791px;top:1020px;font-size:13px">0, 0</div><svg style="position:absolute;left:1848px;top:1017px;" width="17" height="18" viewBox="0 0 17 18" fill="none" stroke="#000" stroke-width="1.3"><path d="M3 13V8C3 4 5 2 8.5 2C12 2 14 4 14 8V13L16 15H1Z M7 16C7 17 10 17 10 16" stroke="#aaa" stroke-width="1.2"/></svg><svg style="position:absolute;left:1872px;top:1016px;" width="48" height="20" viewBox="0 0 48 20" fill="none" stroke="#000" stroke-width="1.3"><path d="M3 18L7 3H12L11 11L16 3H21L17 18H13L15 10L10 18H8L9 10L7 18Z M21 18L25 3H29L25 18Z M25 18L35 3H39L29 18Z" fill="#666" stroke="none"/><path d="M29 3H46L45 6H28Z" fill="#666" stroke="none"/><text x="40" y="8" font-size="6" fill="#888" stroke="none" font-family="Liberation Sans">EC</text></svg></body></html>
